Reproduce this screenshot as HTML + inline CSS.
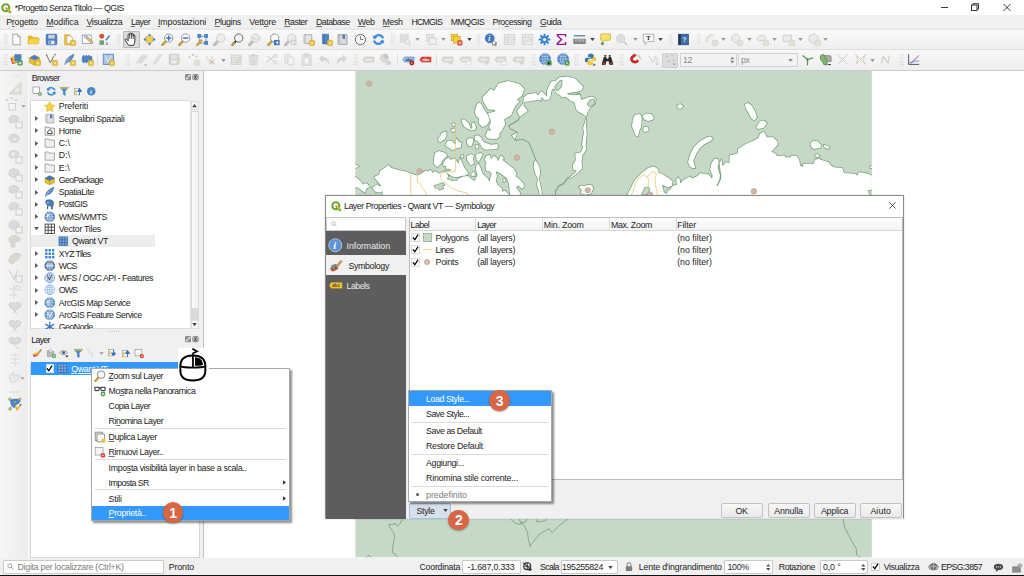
<!DOCTYPE html>
<html lang="it"><head><meta charset="utf-8"><title>*Progetto Senza Titolo — QGIS</title>
<style>
html,body{margin:0;padding:0;}
body{width:1024px;height:576px;overflow:hidden;background:#f0f0f0;position:relative;font-family:"Liberation Sans", Arial, sans-serif;font-size:8.8px;}
.a{position:absolute;}
.t{position:absolute;white-space:pre;line-height:12px;height:12px;font-family:"Liberation Sans", Arial, sans-serif;font-size:8.8px;}
u{text-decoration:underline;text-decoration-thickness:0.6px;text-underline-offset:1px;text-decoration-color:rgba(0,0,0,.55);}
svg{position:absolute;overflow:visible;}
</style></head>
<body>
<div class="a" style="left:0;top:0;width:1024px;height:15px;background:#fff"></div>
<svg viewBox="0 0 16 16" width="10.5" height="10.5" style="left:1.2px;top:2.5px"><circle cx="7.300" cy="7.300" r="5.300" fill="none" stroke="#6aa832" stroke-width="3.200"/><path d="M8.500 8.500l6.500 6.500" stroke="#6aa832" stroke-width="3.400"/><path d="M7.200 7.200l4 .8 3.800 7-6-4.800z" fill="#f0c020"/><circle cx="7.800" cy="7.800" r="1.200" fill="#d9403a"/></svg>
<span class="t" style="left:14.75px;top:1.90px;letter-spacing:-0.482px;color:#1c1c1c;">*Progetto Senza Titolo — QGIS</span>
<svg viewBox="0 0 80 15" width="80" height="15" style="left:936px;top:0"><path d="M5 7.500h7" stroke="#222" stroke-width=".9"/><rect x="35.500" y="5" width="5.500" height="5.500" fill="none" stroke="#222" stroke-width=".9"/><path d="M37 5V3.700h5.500v5.500H41" fill="none" stroke="#222" stroke-width=".9"/><path d="M67.500 4l7 7M74.500 4l-7 7" stroke="#222" stroke-width=".9"/></svg>
<div class="a" style="left:0;top:15px;width:1024px;height:14px;background:#f0f0f0"></div>
<span class="t" style="left:6.20px;top:16.30px;letter-spacing:-0.221px;color:#1c1c1c;">P<u>r</u>ogetto</span>
<span class="t" style="left:46.20px;top:16.30px;letter-spacing:-0.058px;color:#1c1c1c;"><u>M</u>odifica</span>
<span class="t" style="left:86.40px;top:16.30px;letter-spacing:-0.345px;color:#1c1c1c;"><u>V</u>isualizza</span>
<span class="t" style="left:130.90px;top:16.30px;letter-spacing:-0.583px;color:#1c1c1c;"><u>L</u>ayer</span>
<span class="t" style="left:158.00px;top:16.30px;letter-spacing:-0.116px;color:#1c1c1c;"><u>I</u>mpostazioni</span>
<span class="t" style="left:214.40px;top:16.30px;letter-spacing:-0.351px;color:#1c1c1c;"><u>P</u>lugins</span>
<span class="t" style="left:249.30px;top:16.30px;letter-spacing:-0.170px;color:#1c1c1c;">Vett<u>o</u>re</span>
<span class="t" style="left:284.20px;top:16.30px;letter-spacing:-0.487px;color:#1c1c1c;"><u>R</u>aster</span>
<span class="t" style="left:316.00px;top:16.30px;letter-spacing:-0.509px;color:#1c1c1c;"><u>D</u>atabase</span>
<span class="t" style="left:357.80px;top:16.30px;letter-spacing:-0.446px;color:#1c1c1c;"><u>W</u>eb</span>
<span class="t" style="left:382.60px;top:16.30px;letter-spacing:-0.379px;color:#1c1c1c;"><u>M</u>esh</span>
<span class="t" style="left:411.40px;top:16.30px;letter-spacing:-0.767px;color:#1c1c1c;">HCMGIS</span>
<span class="t" style="left:450.70px;top:16.30px;letter-spacing:-0.509px;color:#1c1c1c;">MMQGIS</span>
<span class="t" style="left:492.50px;top:16.30px;letter-spacing:-0.473px;color:#1c1c1c;">Pro<u>c</u>essing</span>
<span class="t" style="left:540.00px;top:16.30px;letter-spacing:-0.457px;color:#1c1c1c;"><u>G</u>uida</span>
<div class="a" style="left:0;top:28px;width:1024px;height:1.500px;background:#e9e9e9"></div>
<div class="a" style="left:0;top:29.500px;width:1024px;height:19.500px;background:linear-gradient(#fafafa,#f8f8f8 15%,#eeeeee)"></div>
<div class="a" style="left:0;top:49px;width:1024px;height:1px;background:#dedede"></div>
<div class="a" style="left:0;top:50px;width:1024px;height:20px;background:linear-gradient(#f8f8f8,#f6f6f6 15%,#eeeeee)"></div>
<div class="a" style="left:0;top:70px;width:1024px;height:1.400px;background:#cbcbcb"></div>
<svg viewBox="0 0 3.500 12" width="3.500" height="12" style="left:3.75px;top:33.20px" fill="#cbcbcb"><rect x=".2" y="0.8" width="1" height="1"/><rect x="2.300" y="0.8" width="1" height="1"/><rect x=".2" y="3.0999999999999996" width="1" height="1"/><rect x="2.300" y="3.0999999999999996" width="1" height="1"/><rect x=".2" y="5.3999999999999995" width="1" height="1"/><rect x="2.300" y="5.3999999999999995" width="1" height="1"/><rect x=".2" y="7.699999999999999" width="1" height="1"/><rect x="2.300" y="7.699999999999999" width="1" height="1"/><rect x=".2" y="10.0" width="1" height="1"/><rect x="2.300" y="10.0" width="1" height="1"/></svg>
<svg viewBox="0 0 3.500 12" width="3.500" height="12" style="left:3.75px;top:53.80px" fill="#cbcbcb"><rect x=".2" y="0.8" width="1" height="1"/><rect x="2.300" y="0.8" width="1" height="1"/><rect x=".2" y="3.0999999999999996" width="1" height="1"/><rect x="2.300" y="3.0999999999999996" width="1" height="1"/><rect x=".2" y="5.3999999999999995" width="1" height="1"/><rect x="2.300" y="5.3999999999999995" width="1" height="1"/><rect x=".2" y="7.699999999999999" width="1" height="1"/><rect x="2.300" y="7.699999999999999" width="1" height="1"/><rect x=".2" y="10.0" width="1" height="1"/><rect x="2.300" y="10.0" width="1" height="1"/></svg>
<div class="a" style="left:123px;top:31px;width:16.500px;height:16.500px;background:#dcdcdc;border:1px solid #b9b9b9;box-sizing:border-box;border-radius:1px"></div>
<svg viewBox="0 0 16 16" width="13" height="13" style="left:10.10px;top:32.70px"><path d="M3.5 1.5h6l3 3v10h-9z" fill="#fff" stroke="#8a8a8a" stroke-width=".9"/><path d="M9.5 1.5v3h3" fill="none" stroke="#8a8a8a" stroke-width=".8"/></svg>
<svg viewBox="0 0 16 16" width="13" height="13" style="left:27.10px;top:32.70px"><path d="M1 3.5h5l1.3 1.6h6.7v8.4h-13z" fill="#e8b92e"/><path d="M1 13.5l2-6.5h12.5l-2 6.5z" fill="#f6d54a" stroke="#d9a520" stroke-width=".5"/></svg>
<svg viewBox="0 0 16 16" width="13" height="13" style="left:44.90px;top:32.70px"><rect x="1.5" y="1.5" width="13" height="13" rx="1.5" fill="#4a7fc0" stroke="#2f5f9e" stroke-width=".8"/><rect x="4" y="2.3" width="8" height="4.6" fill="#c9d2dd"/><rect x="4.3" y="9.5" width="7.4" height="4.3" fill="#e8edf3"/><rect x="5.2" y="10.3" width="2" height="2.8" fill="#3b689f"/></svg>
<svg viewBox="0 0 16 16" width="13" height="13" style="left:62.80px;top:32.70px"><path d="M2 2h6l3 3v9.5h-9z" fill="#f0c53a" stroke="#c79a1e" stroke-width=".7"/><path d="M5 3.5h4l2.5 2.5v7h-6.5z" fill="#fff" stroke="#9a9a9a" stroke-width=".6"/><rect x="9" y="9" width="6.5" height="6.5" rx="1" fill="#e9c13a" stroke="#c9a227" stroke-width=".6"/><path d="M10.6 11.6h3.3l-1.65 2.4z" fill="#fff7c8"/></svg>
<svg viewBox="0 0 16 16" width="13" height="13" style="left:80.50px;top:32.70px"><rect x="1.5" y="2.5" width="11" height="10.5" fill="#fff" stroke="#6d8fb5" stroke-width=".9"/><path d="M5 5l7.5 8 1.8-.4.2-1.8L7 3.5z" fill="#e6c070" stroke="#8a6a2a" stroke-width=".6"/><circle cx="5.6" cy="4.6" r="1.7" fill="#d8d8d8" stroke="#777" stroke-width=".6"/></svg>
<svg viewBox="0 0 16 16" width="13" height="13" style="left:98.00px;top:32.70px"><circle cx="4.6" cy="4" r="3" fill="#d9503a"/><rect x="1.8" y="9" width="5.6" height="5.6" fill="#6aa56a"/><path d="M9 8.5l4.6-6 1.4 1.1-4.6 6z" fill="#3f79c2"/><text x="9.3" y="15" font-size="6.5" font-family="Liberation Serif, serif" fill="#444">a</text></svg>
<svg viewBox="0 0 3.500 12" width="3.500" height="12" style="left:117.25px;top:33.20px" fill="#cbcbcb"><rect x=".2" y="0.8" width="1" height="1"/><rect x="2.300" y="0.8" width="1" height="1"/><rect x=".2" y="3.0999999999999996" width="1" height="1"/><rect x="2.300" y="3.0999999999999996" width="1" height="1"/><rect x=".2" y="5.3999999999999995" width="1" height="1"/><rect x="2.300" y="5.3999999999999995" width="1" height="1"/><rect x=".2" y="7.699999999999999" width="1" height="1"/><rect x="2.300" y="7.699999999999999" width="1" height="1"/><rect x=".2" y="10.0" width="1" height="1"/><rect x="2.300" y="10.0" width="1" height="1"/></svg>
<svg viewBox="0 0 16 16" width="14" height="14" style="left:124.30px;top:32.20px"><path d="M5.400 15.300C4.300 13.400 2.300 11.200 1.300 9.400 0.700 8.200 2.200 7.300 3.200 8.400L4.700 10V3.300c0-1.400 1.900-1.400 1.900 0V2.100c0-1.400 2-1.400 2 0v.6c0-1.400 1.900-1.400 1.900 0v1.700c0-1.300 1.900-1.300 1.900 0v6.100c0 2-.7 3.300-1.400 4.800z" fill="#fff" stroke="#111" stroke-width=".95" stroke-linejoin="round"/><path d="M6.600 3.300v4.500M8.600 2.400v5.100M10.500 3v4.800" stroke="#111" stroke-width=".8" fill="none"/></svg>
<svg viewBox="0 0 16 16" width="13" height="13" style="left:142.90px;top:32.70px"><rect x="4.5" y="4.5" width="7" height="7" fill="#f2d23c" stroke="#c79a1e" stroke-width=".6"/><path d="M8 .5l2.4 3H5.6zM8 15.5l2.4-3H5.6zM.5 8l3-2.4v4.8zM15.5 8l-3-2.4v4.8z" fill="#3f79c2"/></svg>
<svg viewBox="0 0 16 16" width="13" height="13" style="left:160.50px;top:32.70px"><path d="M1.800 14.600l4.200-4.600" stroke="#4a3a10" stroke-width="2.900" stroke-linecap="round" opacity=".55"/><path d="M1.800 14.600l4.200-4.600" stroke="#d9a520" stroke-width="1.900" stroke-linecap="round"/><circle cx="9.500" cy="6.200" r="5.100" fill="#fdfdfd" stroke="#8a8a8a" stroke-width="1.100"/><path d="M6.300 6.200h6.400M9.500 3v6.400" stroke="#3a78c4" stroke-width="1.900"/></svg>
<svg viewBox="0 0 16 16" width="13" height="13" style="left:178.10px;top:32.70px"><path d="M1.800 14.600l4.200-4.600" stroke="#4a3a10" stroke-width="2.900" stroke-linecap="round" opacity=".55"/><path d="M1.800 14.600l4.200-4.600" stroke="#d9a520" stroke-width="1.900" stroke-linecap="round"/><circle cx="9.500" cy="6.200" r="5.100" fill="#fdfdfd" stroke="#8a8a8a" stroke-width="1.100"/><path d="M6.300 6.200h6.400" stroke="#3a78c4" stroke-width="1.900"/></svg>
<svg viewBox="0 0 16 16" width="13" height="13" style="left:196.20px;top:32.70px"><path d="M4 4h8.500v8.500h-8.500z" fill="#f2f2f2" stroke="#6a6a6a" stroke-width=".8"/><rect x="1.600" y="1.200" width="4.800" height="4.800" fill="#4a86c8"/><rect x="10" y="1.200" width="4.800" height="4.800" fill="#4a86c8"/><rect x="10" y="9.800" width="4.800" height="4.800" fill="#4a86c8"/><path d="M1.500 14.800l5-5.500" stroke="#4a3a10" stroke-width="2.800" stroke-linecap="round" opacity=".55"/><path d="M1.500 14.800l5-5.500" stroke="#e0ad25" stroke-width="1.800" stroke-linecap="round"/></svg>
<svg viewBox="0 0 16 16" width="13" height="13" style="left:212.80px;top:32.70px"><path d="M1.800 14.600l4.200-4.600" stroke="#4a3a10" stroke-width="2.900" stroke-linecap="round" opacity=".55"/><path d="M1.800 14.600l4.200-4.600" stroke="#c9c9c9" stroke-width="1.900" stroke-linecap="round"/><circle cx="9.500" cy="6.200" r="5.100" fill="#ececec" stroke="#c9c9c9" stroke-width="1.100"/></svg>
<svg viewBox="0 0 16 16" width="13" height="13" style="left:231.00px;top:32.70px"><path d="M1.800 14.600l4.200-4.600" stroke="#4a3a10" stroke-width="2.900" stroke-linecap="round" opacity=".55"/><path d="M1.800 14.600l4.200-4.600" stroke="#3a3a3a" stroke-width="1.900" stroke-linecap="round"/><circle cx="9.500" cy="6.200" r="5.100" fill="#f4f4f4" stroke="#555" stroke-width="1.100"/><path d="M2 14.5l2-2.2" stroke="#d9a520" stroke-width="2.2" stroke-linecap="round"/></svg>
<svg viewBox="0 0 16 16" width="13" height="13" style="left:248.00px;top:32.70px"><path d="M1.800 14.600l4.200-4.600" stroke="#4a3a10" stroke-width="2.900" stroke-linecap="round" opacity=".55"/><path d="M1.800 14.600l4.200-4.600" stroke="#c9c9c9" stroke-width="1.900" stroke-linecap="round"/><circle cx="9.500" cy="6.200" r="5.100" fill="#ececec" stroke="#c9c9c9" stroke-width="1.100"/><text x="6.4" y="8.3" font-size="5" fill="#bdbdbd" font-family="Liberation Sans, sans-serif">1:1</text></svg>
<svg viewBox="0 0 16 16" width="13" height="13" style="left:266.50px;top:32.70px"><path d="M1.800 14.600l4.200-4.600" stroke="#4a3a10" stroke-width="2.900" stroke-linecap="round" opacity=".55"/><path d="M1.800 14.600l4.200-4.600" stroke="#d9a520" stroke-width="1.900" stroke-linecap="round"/><circle cx="9.500" cy="6.200" r="5.100" fill="#fdfdfd" stroke="#8a8a8a" stroke-width="1.100"/><rect x="8.5" y="8.5" width="7" height="6.5" fill="#3f79c2"/><path d="M13.6 9.8l-3 2 3 2z" fill="#fff"/></svg>
<svg viewBox="0 0 16 16" width="13" height="13" style="left:284.10px;top:32.70px"><path d="M1.800 14.600l4.200-4.600" stroke="#4a3a10" stroke-width="2.900" stroke-linecap="round" opacity=".55"/><path d="M1.800 14.600l4.200-4.600" stroke="#c9c9c9" stroke-width="1.900" stroke-linecap="round"/><circle cx="9.500" cy="6.200" r="5.100" fill="#ececec" stroke="#c9c9c9" stroke-width="1.100"/><rect x="8.5" y="8.5" width="7" height="6.5" fill="#d2d2d2"/><path d="M10.4 9.8l3 2-3 2z" fill="#f4f4f4"/></svg>
<svg viewBox="0 0 16 16" width="13" height="13" style="left:301.50px;top:32.70px"><path d="M2.5 2h9.5v11h-8c-1 0-1.5-.5-1.5-1.5z" fill="#e4e4e4" stroke="#8f8f8f" stroke-width=".8"/><path d="M4.5 2v11" stroke="#a9a9a9" stroke-width=".6"/><rect x="9" y="9" width="6.5" height="6.5" rx="1" fill="#e9c13a" stroke="#c9a227" stroke-width=".6"/><path d="M10.6 11.6h3.3l-1.65 2.4z" fill="#fff7c8"/></svg>
<svg viewBox="0 0 16 16" width="13" height="13" style="left:320.20px;top:32.70px"><path d="M3 1.5h7.5v12h-6c-1 0-1.5-.5-1.5-1.5z" fill="#4a86c8" stroke="#2f5f9e" stroke-width=".7"/><path d="M5 1.5v12" stroke="#2f5f9e" stroke-width=".5"/><rect x="9" y="9" width="6.5" height="6.5" rx="1" fill="#e9c13a" stroke="#c9a227" stroke-width=".6"/><path d="M10.6 11.6h3.3l-1.65 2.4z" fill="#fff7c8"/></svg>
<svg viewBox="0 0 16 16" width="13" height="13" style="left:336.20px;top:32.70px"><path d="M2.5 2h11v12h-9.5c-1 0-1.5-.5-1.5-1.5z" fill="#dcdcdc" stroke="#7f7f7f" stroke-width=".8"/><path d="M4.6 2v12" stroke="#9a9a9a" stroke-width=".6"/><path d="M8 2h3v6l-1.5-1.4L8 8z" fill="#3f79c2"/></svg>
<svg viewBox="0 0 16 16" width="13" height="13" style="left:353.80px;top:32.70px"><circle cx="8" cy="8" r="6.3" fill="#fafafa" stroke="#5a5a5a" stroke-width="1.1"/><path d="M8 3.6V8h3.4" fill="none" stroke="#5a5a5a" stroke-width=".9"/></svg>
<svg viewBox="0 0 16 16" width="13" height="13" style="left:372.00px;top:32.70px"><path d="M13.6 6.6A6 6 0 0 0 3 5.2" fill="none" stroke="#3f8bd8" stroke-width="2.6"/><path d="M.8 3l1.4 5 4.6-2.4z" fill="#3f8bd8"/><path d="M2.4 9.4A6 6 0 0 0 13 10.8" fill="none" stroke="#3f8bd8" stroke-width="2.6"/><path d="M15.2 13l-1.4-5-4.6 2.4z" fill="#3f8bd8"/></svg>
<svg viewBox="0 0 3.500 12" width="3.500" height="12" style="left:390.95px;top:33.20px" fill="#cbcbcb"><rect x=".2" y="0.8" width="1" height="1"/><rect x="2.300" y="0.8" width="1" height="1"/><rect x=".2" y="3.0999999999999996" width="1" height="1"/><rect x="2.300" y="3.0999999999999996" width="1" height="1"/><rect x=".2" y="5.3999999999999995" width="1" height="1"/><rect x="2.300" y="5.3999999999999995" width="1" height="1"/><rect x=".2" y="7.699999999999999" width="1" height="1"/><rect x="2.300" y="7.699999999999999" width="1" height="1"/><rect x=".2" y="10.0" width="1" height="1"/><rect x="2.300" y="10.0" width="1" height="1"/></svg>
<svg viewBox="0 0 16 16" width="13" height="13" style="left:398.90px;top:32.70px"><rect x="1.5" y="1.5" width="10" height="10" fill="#dedede" stroke="#c9c9c9" stroke-width=".8" stroke-dasharray="1.5 1"/><path d="M8 7l1 7.5 1.8-2 2 3 1.2-.8-2-3 2.6-.6z" fill="#f7f7f7" stroke="#bdbdbd" stroke-width=".6"/></svg>
<svg viewBox="0 0 6 4" width="5" height="3" style="left:415.20px;top:38.20px"><path d="M0 0h6L3 4z" fill="#9a9a9a"/></svg>
<svg viewBox="0 0 16 16" width="13" height="13" style="left:424.50px;top:32.70px"><rect x="2" y="2" width="9" height="8" fill="#e3e3e3" stroke="#c9c9c9" stroke-width=".7"/><rect x="5" y="6" width="9" height="8" fill="#e9e9e9" stroke="#c9c9c9" stroke-width=".7"/><path d="M6.5 9h6M6.5 11.5h6" stroke="#f8f8f8" stroke-width="1"/></svg>
<svg viewBox="0 0 6 4" width="5" height="3" style="left:441.00px;top:38.20px"><path d="M0 0h6L3 4z" fill="#9a9a9a"/></svg>
<svg viewBox="0 0 16 16" width="13" height="13" style="left:450.30px;top:32.70px"><rect x="1.5" y="1.5" width="8" height="8" fill="#f2d23c" stroke="#c79a1e" stroke-width=".7"/><rect x="4.5" y="4.5" width="8" height="8" fill="#f2d23c" stroke="#c79a1e" stroke-width=".7"/><rect x="9" y="9" width="6.3" height="6.3" rx="1" fill="#d9503a"/><path d="M10.6 10.6l3.1 3.1M13.7 10.6l-3.1 3.1" stroke="#fff" stroke-width=".9"/></svg>
<svg viewBox="0 0 6 4" width="5" height="3" style="left:466.50px;top:38.20px"><path d="M0 0h6L3 4z" fill="#444"/></svg>
<svg viewBox="0 0 3.500 12" width="3.500" height="12" style="left:477.25px;top:33.20px" fill="#cbcbcb"><rect x=".2" y="0.8" width="1" height="1"/><rect x="2.300" y="0.8" width="1" height="1"/><rect x=".2" y="3.0999999999999996" width="1" height="1"/><rect x="2.300" y="3.0999999999999996" width="1" height="1"/><rect x=".2" y="5.3999999999999995" width="1" height="1"/><rect x="2.300" y="5.3999999999999995" width="1" height="1"/><rect x=".2" y="7.699999999999999" width="1" height="1"/><rect x="2.300" y="7.699999999999999" width="1" height="1"/><rect x=".2" y="10.0" width="1" height="1"/><rect x="2.300" y="10.0" width="1" height="1"/></svg>
<svg viewBox="0 0 16 16" width="13" height="13" style="left:484.30px;top:32.70px"><circle cx="7" cy="6.6" r="5.6" fill="#3f79c2" stroke="#2f5f9e" stroke-width=".6"/><text x="5.3" y="10" font-size="9" font-weight="bold" font-style="italic" font-family="Liberation Serif, serif" fill="#fff">i</text><path d="M10 8.5l1 7 1.6-1.8 1.6 2.4 1-.7-1.6-2.4 2.3-.5z" fill="#fff" stroke="#333" stroke-width=".7"/></svg>
<svg viewBox="0 0 16 16" width="13" height="13" style="left:502.80px;top:32.70px"><rect x="1.5" y="2" width="13" height="12" fill="#ececec" stroke="#c9c9c9" stroke-width=".8"/><path d="M1.5 5.5h13M1.5 8.4h13M1.5 11.2h13M6 2v12" stroke="#c9c9c9" stroke-width=".7"/></svg>
<svg viewBox="0 0 16 16" width="13" height="13" style="left:520.50px;top:32.70px"><rect x="1.5" y="2" width="13" height="12" fill="#ececec" stroke="#c9c9c9" stroke-width=".8"/><path d="M1.5 6h13M1.5 10h13" stroke="#c9c9c9" stroke-width=".7"/><circle cx="5" cy="4" r="1" fill="#c9c9c9"/><circle cx="9" cy="4" r="1" fill="#c9c9c9"/><circle cx="12" cy="8" r="1" fill="#c9c9c9"/><circle cx="4" cy="12" r="1" fill="#c9c9c9"/></svg>
<svg viewBox="0 0 16 16" width="13" height="13" style="left:538.00px;top:32.70px"><g fill="#3f86d2"><circle cx="8" cy="8" r="4.6"/><g stroke="#3f86d2" stroke-width="2.4"><path d="M8 .8v14.4M.8 8h14.4M2.9 2.9l10.2 10.2M13.1 2.9L2.9 13.1"/></g></g><circle cx="8" cy="8" r="2" fill="#f0f0f0"/></svg>
<svg viewBox="0 0 16 16" width="13" height="13" style="left:555.10px;top:32.70px"><path d="M13 4.6V2H3v1.4L8 8l-5 4.8V14h10v-2.8" fill="none" stroke="#8e1f8e" stroke-width="1.8"/></svg>
<svg viewBox="0 0 16 16" width="13" height="13" style="left:573.30px;top:32.70px"><path d="M1 3.5h14" stroke="#2f5f9e" stroke-width="1.3"/><rect x="1" y="7.5" width="14" height="5.5" fill="#8c8c8c" stroke="#555" stroke-width=".7"/><path d="M3.5 7.5v3M6 7.5v2M8.5 7.5v3M11 7.5v2M13.2 7.5v3" stroke="#fff" stroke-width=".7"/></svg>
<svg viewBox="0 0 6 4" width="5" height="3" style="left:589.50px;top:38.20px"><path d="M0 0h6L3 4z" fill="#444"/></svg>
<svg viewBox="0 0 16 16" width="13" height="13" style="left:598.50px;top:32.70px"><path d="M2 2.5c0-1 .8-1.5 1.6-1.5h9c1 0 1.6.6 1.6 1.5v5c0 1-.7 1.5-1.6 1.5H7l-3 3V9c-1.2 0-2-.6-2-1.5z" fill="#f5e26a" stroke="#c9a227" stroke-width=".8"/><circle cx="4.2" cy="13" r="2" fill="#58a058"/></svg>
<svg viewBox="0 0 16 16" width="13" height="13" style="left:615.30px;top:32.70px"><circle cx="7" cy="7" r="5" fill="#e6e6e6" stroke="#c9c9c9" stroke-width="1"/><circle cx="7" cy="7" r="2.2" fill="none" stroke="#c9c9c9" stroke-width="1"/><path d="M10.5 10.5l4 4" stroke="#c9c9c9" stroke-width="1.6"/></svg>
<svg viewBox="0 0 6 4" width="5" height="3" style="left:632.90px;top:38.20px"><path d="M0 0h6L3 4z" fill="#9a9a9a"/></svg>
<svg viewBox="0 0 16 16" width="13" height="13" style="left:641.50px;top:32.70px"><path d="M1.5 1.5h13v9h-7l-4 3.5v-3.5h-2z" fill="#fbfbfb" stroke="#8a8a8a" stroke-width=".8"/><text x="5.2" y="9" font-size="8" font-weight="bold" font-family="Liberation Serif, serif" fill="#222">T</text></svg>
<svg viewBox="0 0 6 4" width="5" height="3" style="left:658.30px;top:38.20px"><path d="M0 0h6L3 4z" fill="#444"/></svg>
<svg viewBox="0 0 3.500 12" width="3.500" height="12" style="left:669.25px;top:33.20px" fill="#cbcbcb"><rect x=".2" y="0.8" width="1" height="1"/><rect x="2.300" y="0.8" width="1" height="1"/><rect x=".2" y="3.0999999999999996" width="1" height="1"/><rect x="2.300" y="3.0999999999999996" width="1" height="1"/><rect x=".2" y="5.3999999999999995" width="1" height="1"/><rect x="2.300" y="5.3999999999999995" width="1" height="1"/><rect x=".2" y="7.699999999999999" width="1" height="1"/><rect x="2.300" y="7.699999999999999" width="1" height="1"/><rect x=".2" y="10.0" width="1" height="1"/><rect x="2.300" y="10.0" width="1" height="1"/></svg>
<svg viewBox="0 0 16 16" width="13" height="13" style="left:676.80px;top:32.70px"><rect x="2" y="1.5" width="12" height="13" fill="#3c6ea8" stroke="#1f3f66" stroke-width=".8"/><rect x="2" y="1.5" width="2.6" height="13" fill="#1f3352"/><text x="6.4" y="11.3" font-size="8.5" font-weight="bold" font-family="Liberation Sans, sans-serif" fill="#dfe9f5">?</text></svg>
<svg viewBox="0 0 3.500 12" width="3.500" height="12" style="left:696.55px;top:33.20px" fill="#cbcbcb"><rect x=".2" y="0.8" width="1" height="1"/><rect x="2.300" y="0.8" width="1" height="1"/><rect x=".2" y="3.0999999999999996" width="1" height="1"/><rect x="2.300" y="3.0999999999999996" width="1" height="1"/><rect x=".2" y="5.3999999999999995" width="1" height="1"/><rect x="2.300" y="5.3999999999999995" width="1" height="1"/><rect x=".2" y="7.699999999999999" width="1" height="1"/><rect x="2.300" y="7.699999999999999" width="1" height="1"/><rect x=".2" y="10.0" width="1" height="1"/><rect x="2.300" y="10.0" width="1" height="1"/></svg>
<svg viewBox="0 0 16 16" width="13" height="13" style="left:704.50px;top:32.70px"><path d="M2 12V8a6 6 0 0 1 9-5" fill="#ebebeb" stroke="#c9c9c9" stroke-width="1"/><rect x="9" y="9" width="6.5" height="6.5" rx="1" fill="#e4e2da" stroke="#c9c7bd" stroke-width=".6"/></svg>
<svg viewBox="0 0 6 4" width="5" height="3" style="left:720.80px;top:38.20px"><path d="M0 0h6L3 4z" fill="#9a9a9a"/></svg>
<svg viewBox="0 0 16 16" width="13" height="13" style="left:729.50px;top:32.70px"><path d="M7 1.5a5.2 5.2 0 1 0 .1 0z" fill="#ebebeb" stroke="#c9c9c9" stroke-width="1"/><rect x="9" y="9" width="6.5" height="6.5" rx="1" fill="#e4e2da" stroke="#c9c7bd" stroke-width=".6"/></svg>
<svg viewBox="0 0 6 4" width="5" height="3" style="left:746.50px;top:38.20px"><path d="M0 0h6L3 4z" fill="#9a9a9a"/></svg>
<svg viewBox="0 0 16 16" width="13" height="13" style="left:755.90px;top:32.70px"><path d="M1 8c1-4 5-6 8-5s4 5 0 6-6 1-8-1z" fill="#ebebeb" stroke="#c9c9c9" stroke-width="1"/><rect x="9" y="9" width="6.5" height="6.5" rx="1" fill="#e4e2da" stroke="#c9c7bd" stroke-width=".6"/></svg>
<svg viewBox="0 0 6 4" width="5" height="3" style="left:772.10px;top:38.20px"><path d="M0 0h6L3 4z" fill="#9a9a9a"/></svg>
<svg viewBox="0 0 16 16" width="13" height="13" style="left:781.80px;top:32.70px"><path d="M1.5 2.5h10v8h-10z" fill="#ebebeb" stroke="#c9c9c9" stroke-width="1"/><rect x="9" y="9" width="6.5" height="6.5" rx="1" fill="#e4e2da" stroke="#c9c7bd" stroke-width=".6"/></svg>
<svg viewBox="0 0 6 4" width="5" height="3" style="left:797.50px;top:38.20px"><path d="M0 0h6L3 4z" fill="#9a9a9a"/></svg>
<svg viewBox="0 0 16 16" width="13" height="13" style="left:807.50px;top:32.70px"><path d="M7 1l5.5 3v6l-5.5 3-5.5-3v-6z" fill="#ebebeb" stroke="#c9c9c9" stroke-width="1"/><rect x="9" y="9" width="6.5" height="6.5" rx="1" fill="#e4e2da" stroke="#c9c7bd" stroke-width=".6"/></svg>
<svg viewBox="0 0 6 4" width="5" height="3" style="left:823.30px;top:38.20px"><path d="M0 0h6L3 4z" fill="#9a9a9a"/></svg>
<div class="a" style="left:661.800px;top:52.500px;width:16.500px;height:15.500px;background:#dddddd;border:1px solid #cfcfcf;box-sizing:border-box;border-radius:1px"></div>
<svg viewBox="0 0 16 16" width="13" height="13" style="left:10.10px;top:53.30px"><rect x="1.5" y="5" width="8" height="8" fill="#d9503a" transform="rotate(-18 5 9)"/><rect x="3" y="3.5" width="8" height="8" fill="#f0c53a" transform="rotate(-8 7 7)"/><rect x="5.5" y="1.5" width="8.5" height="8.5" fill="#4a7fc0"/><rect x="9.3" y="9.3" width="6.2" height="6.2" rx="1" fill="#4a9a4a"/><path d="M10.6 12.4h3.6M12.4 10.6v3.6" stroke="#fff" stroke-width="1.1"/></svg>
<svg viewBox="0 0 16 16" width="13" height="13" style="left:27.70px;top:53.30px"><path d="M1.5 6l6.5-3.5 6.5 3.5v6l-6.5 3-6.5-3z" fill="#e8c02e" stroke="#b8921a" stroke-width=".6"/><path d="M1.5 6l6.5 3 6.5-3-6.5-3.5z" fill="#4a7fc0"/><path d="M8 9v6" stroke="#b8921a" stroke-width=".6"/><rect x="9" y="9" width="6.5" height="6.5" rx="1" fill="#e9c13a" stroke="#c9a227" stroke-width=".6"/><path d="M10.6 11.6h3.3l-1.65 2.4z" fill="#fff7c8"/></svg>
<svg viewBox="0 0 16 16" width="13" height="13" style="left:45.30px;top:53.30px"><path d="M2 2.5l4.5 9.5L11 3.5" fill="none" stroke="#555" stroke-width="1"/><circle cx="2" cy="2.5" r="1" fill="#777"/><circle cx="12.5" cy="2" r="1" fill="#777"/><rect x="9" y="9" width="6.5" height="6.5" rx="1" fill="#e9c13a" stroke="#c9a227" stroke-width=".6"/><path d="M10.6 11.6h3.3l-1.65 2.4z" fill="#fff7c8"/></svg>
<svg viewBox="0 0 16 16" width="13" height="13" style="left:62.80px;top:53.30px"><path d="M2 14.5c1-5 4-10 11.5-13-1 5-4.5 9.5-9 10.5z" fill="#5d8fcc" stroke="#2f5f9e" stroke-width=".6"/><path d="M2 14.5l6-8" stroke="#e8eef6" stroke-width=".6"/><rect x="9" y="9" width="6.5" height="6.5" rx="1" fill="#e9c13a" stroke="#c9a227" stroke-width=".6"/><path d="M10.6 11.6h3.3l-1.65 2.4z" fill="#fff7c8"/></svg>
<svg viewBox="0 0 16 16" width="13" height="13" style="left:80.80px;top:53.30px"><rect x="1.5" y="4" width="12" height="7" rx="1" fill="#4a86c8" stroke="#2f5f9e" stroke-width=".6"/><path d="M3.5 4V2.4M6.5 4V2.4M9.5 4V2.4M3.5 11v1.6M6.5 11v1.6" stroke="#2f5f9e" stroke-width="1.1"/><rect x="9" y="9" width="6.5" height="6.5" rx="1" fill="#e9c13a" stroke="#c9a227" stroke-width=".6"/><path d="M10.6 11.6h3.3l-1.65 2.4z" fill="#fff7c8"/></svg>
<div class="a" style="left:97.10px;top:53.80px;width:1px;height:12px;background:#e0e0e0"></div>
<svg viewBox="0 0 16 16" width="13" height="13" style="left:101.90px;top:53.30px"><rect x="1.5" y="1.5" width="12.5" height="12.5" fill="#a9c6e6" stroke="#4a7fc0" stroke-width="1"/><path d="M4 3l3.6 8L11.5 3" fill="none" stroke="#f4f7fb" stroke-width="1.1"/><rect x="9" y="9" width="6.5" height="6.5" rx="1" fill="#e9c13a" stroke="#c9a227" stroke-width=".6"/><path d="M10.6 11.6h3.3l-1.65 2.4z" fill="#fff7c8"/></svg>
<svg viewBox="0 0 3.500 12" width="3.500" height="12" style="left:126.25px;top:53.80px" fill="#cbcbcb"><rect x=".2" y="0.8" width="1" height="1"/><rect x="2.300" y="0.8" width="1" height="1"/><rect x=".2" y="3.0999999999999996" width="1" height="1"/><rect x="2.300" y="3.0999999999999996" width="1" height="1"/><rect x=".2" y="5.3999999999999995" width="1" height="1"/><rect x="2.300" y="5.3999999999999995" width="1" height="1"/><rect x=".2" y="7.699999999999999" width="1" height="1"/><rect x="2.300" y="7.699999999999999" width="1" height="1"/><rect x=".2" y="10.0" width="1" height="1"/><rect x="2.300" y="10.0" width="1" height="1"/></svg>
<svg viewBox="0 0 16 16" width="13" height="13" style="left:134.50px;top:53.30px"><path d="M2 13l1-3 6-8 2 1.5-6 8zM6 13l1-3 6-8 2 1.5-6 8z" fill="#dedede" stroke="#c9c9c9" stroke-width=".7"/><path d="M11 14h4l-2 2z" fill="#9a9a9a"/></svg>
<svg viewBox="0 0 16 16" width="13" height="13" style="left:150.50px;top:53.30px"><path d="M3 14l1-3.4 7-9 2.2 1.7-7 9z" fill="#e2e2e2" stroke="#c9c9c9" stroke-width=".8"/></svg>
<svg viewBox="0 0 16 16" width="13" height="13" style="left:167.90px;top:53.30px"><rect x="1.500" y="1.500" width="12" height="12.500" rx="1.500" fill="#d3d3d3" stroke="#c4c4c4" stroke-width=".8"/><rect x="3.800" y="2.300" width="7.400" height="4.400" fill="#e6e6e6"/><rect x="4" y="9" width="7" height="4.300" fill="#ebebeb"/><path d="M9 13.500l5-6 1.300 1-5 6z" fill="#e3ddc9" stroke="#cfc9b6" stroke-width=".5"/></svg>
<svg viewBox="0 0 16 16" width="13" height="13" style="left:187.00px;top:53.30px"><circle cx="3" cy="5" r="1.4" fill="#c9c9c9"/><circle cx="7" cy="2.4" r="1.4" fill="#c9c9c9"/><circle cx="11.5" cy="4.4" r="1.4" fill="#c9c9c9"/><rect x="9" y="9" width="6.5" height="6.5" rx="1" fill="#e4e2da" stroke="#c9c7bd" stroke-width=".6"/></svg>
<svg viewBox="0 0 16 16" width="13" height="13" style="left:204.00px;top:53.30px"><path d="M2 3l5 9 4-9" fill="none" stroke="#c9c9c9" stroke-width="1"/><path d="M7 8l6 6M13 8l-6 6" stroke="#cdbf9a" stroke-width="1.3"/></svg>
<svg viewBox="0 0 6 4" width="5" height="3" style="left:220.50px;top:58.80px"><path d="M0 0h6L3 4z" fill="#9a9a9a"/></svg>
<svg viewBox="0 0 16 16" width="13" height="13" style="left:229.50px;top:53.30px"><rect x="1.5" y="2.5" width="12" height="11.5" fill="#e7e7e7" stroke="#c9c9c9" stroke-width=".8"/><path d="M1.5 6h12M1.5 9h12M1.5 12h12" stroke="#c9c9c9" stroke-width=".7"/><path d="M7 12l6-9 1.8 1.2-6 9z" fill="#e1dccb" stroke="#c9c9c9" stroke-width=".5"/></svg>
<svg viewBox="0 0 16 16" width="13" height="13" style="left:246.50px;top:53.30px"><path d="M3 5h10l-1 9.5H4z" fill="#e4e4e4" stroke="#c9c9c9" stroke-width=".8"/><path d="M2 3.5h12M6 2h4" stroke="#c9c9c9" stroke-width="1.2"/><path d="M6 7v6M8 7v6M10 7v6" stroke="#c9c9c9" stroke-width=".7"/></svg>
<svg viewBox="0 0 16 16" width="13" height="13" style="left:264.50px;top:53.30px"><path d="M2 3l10 8M2 11l10-8" stroke="#c9c9c9" stroke-width="1.2"/><circle cx="12.8" cy="11.8" r="1.8" fill="none" stroke="#c9c9c9" stroke-width="1"/><circle cx="12.8" cy="3.8" r="1.8" fill="none" stroke="#c9c9c9" stroke-width="1"/></svg>
<svg viewBox="0 0 16 16" width="13" height="13" style="left:282.50px;top:53.30px"><path d="M2.5 2h6l2 2v8h-8z" fill="#ececec" stroke="#c9c9c9" stroke-width=".8"/><path d="M6 5h5.5l2 2v7.5H6z" fill="#f2f2f2" stroke="#c9c9c9" stroke-width=".8"/></svg>
<svg viewBox="0 0 16 16" width="13" height="13" style="left:299.50px;top:53.30px"><rect x="2.5" y="2.5" width="11" height="12.5" fill="#e6e6e6" stroke="#c9c9c9" stroke-width=".9"/><rect x="5.5" y="1" width="5" height="3" fill="#dadada" stroke="#c9c9c9" stroke-width=".6"/><rect x="5" y="6" width="6" height="7.5" fill="#f5f5f5" stroke="#c9c9c9" stroke-width=".6"/></svg>
<svg viewBox="0 0 16 16" width="13" height="13" style="left:317.50px;top:53.30px"><path d="M13 13c1-5-2-7.5-7-7.5V2.5L1.5 7 6 11.5V8.6c3.5 0 5.5 1 7 4.4z" fill="#d6d6d6" stroke="#c9c9c9" stroke-width=".5"/></svg>
<svg viewBox="0 0 16 16" width="13" height="13" style="left:335.20px;top:53.30px"><path d="M3 13c-1-5 2-7.5 7-7.5V2.5L14.500 7 10 11.5V8.6c-3.500 0-5.500 1-7 4.400z" fill="#d6d6d6" stroke="#c9c9c9" stroke-width=".5"/></svg>
<svg viewBox="0 0 3.500 12" width="3.500" height="12" style="left:354.25px;top:53.80px" fill="#cbcbcb"><rect x=".2" y="0.8" width="1" height="1"/><rect x="2.300" y="0.8" width="1" height="1"/><rect x=".2" y="3.0999999999999996" width="1" height="1"/><rect x="2.300" y="3.0999999999999996" width="1" height="1"/><rect x=".2" y="5.3999999999999995" width="1" height="1"/><rect x="2.300" y="5.3999999999999995" width="1" height="1"/><rect x=".2" y="7.699999999999999" width="1" height="1"/><rect x="2.300" y="7.699999999999999" width="1" height="1"/><rect x=".2" y="10.0" width="1" height="1"/><rect x="2.300" y="10.0" width="1" height="1"/></svg>
<svg viewBox="0 0 16 16" width="13" height="13" style="left:362.20px;top:53.30px"><path d="M1 8l2.200-3h11.500v6H3.200z" fill="#dcdad2" stroke="#c6c4ba" stroke-width=".7"/><text x="4.300" y="10" font-size="5" font-weight="bold" font-family="Liberation Sans, sans-serif" fill="#f3f3f3">abc</text></svg>
<svg viewBox="0 0 16 16" width="13" height="13" style="left:379.00px;top:53.30px"><circle cx="6.500" cy="6.500" r="5.500" fill="#d9d9d9"/><path d="M6.500 6.500V1a5.500 5.500 0 0 1 5.500 5.500z" fill="#c4c4c4"/><rect x="9" y="10" width="5.500" height="4.500" fill="#cfcfcf"/></svg>
<div class="a" style="left:397.10px;top:53.80px;width:1px;height:12px;background:#e0e0e0"></div>
<svg viewBox="0 0 16 16" width="13" height="13" style="left:401.80px;top:53.30px"><path d="M1 8l2.200-3h11.500v6H3.200z" fill="#9cc0ea" stroke="#3f79c2" stroke-width=".7"/><text x="4.300" y="10" font-size="5" font-weight="bold" font-family="Liberation Sans, sans-serif" fill="#1f3f66">abc</text><circle cx="12" cy="12.300" r="3" fill="#b3261e"/><circle cx="12" cy="12.300" r="1" fill="#f0c0c0"/></svg>
<svg viewBox="0 0 16 16" width="13" height="13" style="left:418.80px;top:53.30px"><path d="M1 8l2.200-3h11.500v6H3.200z" fill="#e8413c" stroke="#c62828" stroke-width=".7"/><text x="4.300" y="10" font-size="5" font-weight="bold" font-family="Liberation Sans, sans-serif" fill="#ffffff">abc</text></svg>
<div class="a" style="left:436.10px;top:53.80px;width:1px;height:12px;background:#e0e0e0"></div>
<svg viewBox="0 0 16 16" width="13" height="13" style="left:440.90px;top:53.30px"><path d="M1 8l2.200-3h11.500v6H3.200z" fill="#dcdad2" stroke="#c6c4ba" stroke-width=".7"/><text x="4.300" y="10" font-size="5" font-weight="bold" font-family="Liberation Sans, sans-serif" fill="#f3f3f3">abc</text><circle cx="12" cy="12" r="2.600" fill="#d4d4d4"/></svg>
<svg viewBox="0 0 16 16" width="13" height="13" style="left:458.50px;top:53.30px"><path d="M1 8l2.200-3h11.500v6H3.200z" fill="#dcdad2" stroke="#c6c4ba" stroke-width=".7"/><text x="4.300" y="10" font-size="5" font-weight="bold" font-family="Liberation Sans, sans-serif" fill="#f3f3f3">abc</text><rect x="9.500" y="10" width="5.500" height="4.500" fill="#f6f6f6" stroke="#cfcfcf" stroke-width=".6"/></svg>
<svg viewBox="0 0 16 16" width="13" height="13" style="left:476.50px;top:53.30px"><path d="M1 8l2.200-3h11.500v6H3.200z" fill="#dcdad2" stroke="#c6c4ba" stroke-width=".7"/><text x="4.300" y="10" font-size="5" font-weight="bold" font-family="Liberation Sans, sans-serif" fill="#f3f3f3">abc</text><circle cx="12" cy="12" r="2.600" fill="#d4d4d4"/></svg>
<svg viewBox="0 0 16 16" width="13" height="13" style="left:494.00px;top:53.30px"><path d="M1 8l2.200-3h11.500v6H3.200z" fill="#dcdad2" stroke="#c6c4ba" stroke-width=".7"/><text x="4.300" y="10" font-size="5" font-weight="bold" font-family="Liberation Sans, sans-serif" fill="#f3f3f3">abc</text><rect x="9.500" y="10" width="5.500" height="4.500" fill="#f6f6f6" stroke="#cfcfcf" stroke-width=".6"/></svg>
<svg viewBox="0 0 16 16" width="13" height="13" style="left:511.50px;top:53.30px"><path d="M1 8l2.200-3h11.500v6H3.200z" fill="#dcdad2" stroke="#c6c4ba" stroke-width=".7"/><text x="4.300" y="10" font-size="5" font-weight="bold" font-family="Liberation Sans, sans-serif" fill="#f3f3f3">abc</text><circle cx="12" cy="12" r="2.600" fill="#d4d4d4"/></svg>
<svg viewBox="0 0 3.500 12" width="3.500" height="12" style="left:531.55px;top:53.80px" fill="#cbcbcb"><rect x=".2" y="0.8" width="1" height="1"/><rect x="2.300" y="0.8" width="1" height="1"/><rect x=".2" y="3.0999999999999996" width="1" height="1"/><rect x="2.300" y="3.0999999999999996" width="1" height="1"/><rect x=".2" y="5.3999999999999995" width="1" height="1"/><rect x="2.300" y="5.3999999999999995" width="1" height="1"/><rect x=".2" y="7.699999999999999" width="1" height="1"/><rect x="2.300" y="7.699999999999999" width="1" height="1"/><rect x=".2" y="10.0" width="1" height="1"/><rect x="2.300" y="10.0" width="1" height="1"/></svg>
<svg viewBox="0 0 16 16" width="13" height="13" style="left:539.10px;top:53.30px"><circle cx="7.500" cy="7.500" r="6.800" fill="#4a86c8" stroke="#2f5f9e" stroke-width=".6"/><path d="M7.500.7v13.600M.7 7.500h13.600M2.500 3.300c3 1.600 7 1.600 10 0M2.500 11.700c3-1.600 7-1.600 10 0" fill="none" stroke="#cfe0f3" stroke-width=".7"/><ellipse cx="7.500" cy="7.500" rx="3.200" ry="6.800" fill="none" stroke="#cfe0f3" stroke-width=".7"/><rect x="9.500" y="9.500" width="6" height="6" rx="1" fill="#4a9a4a"/><path d="M11 11l3 1.500-3 1.500z" fill="#222"/></svg>
<svg viewBox="0 0 16 16" width="13" height="13" style="left:557.10px;top:53.30px"><circle cx="7.500" cy="7.500" r="6.800" fill="#4a86c8" stroke="#2f5f9e" stroke-width=".6"/><path d="M7.500.7v13.600M.7 7.500h13.600M2.500 3.300c3 1.600 7 1.600 10 0M2.500 11.700c3-1.600 7-1.600 10 0" fill="none" stroke="#cfe0f3" stroke-width=".7"/><ellipse cx="7.500" cy="7.500" rx="3.200" ry="6.800" fill="none" stroke="#cfe0f3" stroke-width=".7"/><rect x="9.500" y="9.500" width="6" height="6" rx="1" fill="#4a9a4a"/><path d="M11 14l3-3M11 11l3 3" stroke="#dff0df" stroke-width=".8"/></svg>
<svg viewBox="0 0 3.500 12" width="3.500" height="12" style="left:575.25px;top:53.80px" fill="#cbcbcb"><rect x=".2" y="0.8" width="1" height="1"/><rect x="2.300" y="0.8" width="1" height="1"/><rect x=".2" y="3.0999999999999996" width="1" height="1"/><rect x="2.300" y="3.0999999999999996" width="1" height="1"/><rect x=".2" y="5.3999999999999995" width="1" height="1"/><rect x="2.300" y="5.3999999999999995" width="1" height="1"/><rect x=".2" y="7.699999999999999" width="1" height="1"/><rect x="2.300" y="7.699999999999999" width="1" height="1"/><rect x=".2" y="10.0" width="1" height="1"/><rect x="2.300" y="10.0" width="1" height="1"/></svg>
<svg viewBox="0 0 16 16" width="13" height="13" style="left:584.00px;top:53.30px"><path d="M7.800 1C5 1 5 2.300 5 3.300V5h3.200v.7H3.300C1.800 5.700 1 6.800 1 8.500s.8 2.800 2.200 2.800H5V9.200c0-1.300 1-2.200 2.200-2.200h3c1 0 1.800-.8 1.800-1.800v-2C12 1.800 10.600 1 7.800 1z" fill="#3b77a8"/><path d="M8.200 15c2.800 0 2.800-1.300 2.800-2.300V11H7.800v-.7h4.900c1.500 0 2.300-1.100 2.300-2.800s-.8-2.800-2.200-2.800H11v2.100c0 1.300-1 2.200-2.200 2.200h-3c-1 0-1.800.8-1.800 1.800v2c0 1.400 1.400 2.200 4.200 2.200z" fill="#f2c83a"/><path d="M11 13.500l3 1-3 1" fill="none" stroke="#222" stroke-width=".7"/></svg>
<svg viewBox="0 0 16 16" width="13" height="13" style="left:601.20px;top:53.30px"><path d="M1 13.500L3.500 5h3l.5 2h2l.5-2h3L15 13.500c.3 1.500-5 1.500-5 0L9.500 10h-3L6 13.500c0 1.500-5.300 1.500-5 0z" fill="#2a2a2a"/><path d="M4 4.600V2.500h2.500v2.100M9.500 4.600V2.500H12v2.100" fill="#444"/><circle cx="3.600" cy="13" r="1.500" fill="#b33"/><circle cx="12.400" cy="13" r="1.500" fill="#b33"/></svg>
<svg viewBox="0 0 3.500 12" width="3.500" height="12" style="left:620.25px;top:53.80px" fill="#cbcbcb"><rect x=".2" y="0.8" width="1" height="1"/><rect x="2.300" y="0.8" width="1" height="1"/><rect x=".2" y="3.0999999999999996" width="1" height="1"/><rect x="2.300" y="3.0999999999999996" width="1" height="1"/><rect x=".2" y="5.3999999999999995" width="1" height="1"/><rect x="2.300" y="5.3999999999999995" width="1" height="1"/><rect x=".2" y="7.699999999999999" width="1" height="1"/><rect x="2.300" y="7.699999999999999" width="1" height="1"/><rect x=".2" y="10.0" width="1" height="1"/><rect x="2.300" y="10.0" width="1" height="1"/></svg>
<svg viewBox="0 0 16 16" width="13" height="13" style="left:628.90px;top:53.30px"><path d="M3.200 2.500l-1.500 4c-1.200 4 1.500 7 5 7s6.200-2.500 6-6.500l-3.200-.6c.2 2.300-1 3.700-2.800 3.700S4.200 8.800 5 7l1.300-3.500z" fill="#c62828" transform="rotate(35 8 8)"/><path d="M10.500 1.200l2.800 1.800-1 1.600-2.800-1.800zM13.600 4.300l1.600 2.900-1.600.9-1.600-2.900z" fill="#e8e8e8" stroke="#999" stroke-width=".4"/></svg>
<svg viewBox="0 0 16 16" width="13" height="13" style="left:646.50px;top:53.30px"><path d="M2 3l5 9 4-9" fill="none" stroke="#c9c9c9" stroke-width="1"/><path d="M10 6h4M10 8.500h4M10 11h4" stroke="#c9c9c9" stroke-width=".8"/><path d="M10.500 13h4l-2 2z" fill="#b5b5b5"/></svg>
<svg viewBox="0 0 16 16" width="13" height="13" style="left:801.00px;top:53.30px"><path d="M8 15V8M8 8L2 3M8 8l7-2" fill="none" stroke="#4a9a4a" stroke-width="1.500"/><circle cx="8" cy="8" r="1.500" fill="#777"/></svg>
<svg viewBox="0 0 16 16" width="13" height="13" style="left:818.90px;top:53.30px"><path d="M6 3h7c1.500 0 2 1 2 2.500v5H9z" fill="#a8a8a8" stroke="#666" stroke-width=".6"/><path d="M1.500 5c0-2 2-3.500 4.500-3l2 4 1.500 3 1 5.500H6L4 10 2 8.500z" fill="#7fb86a" stroke="#3f7a34" stroke-width=".8"/><path d="M11 13.500h4l-2 2z" fill="#222"/></svg>
<svg viewBox="0 0 16 16" width="13" height="13" style="left:836.10px;top:53.30px"><path d="M2 2l12 12M14 2L2 14" stroke="#c9c9c9" stroke-width="1.100"/></svg>
<svg viewBox="0 0 16 16" width="13" height="13" style="left:853.50px;top:53.30px"><path d="M2 2c3 4 3 8 0 12M14 2c-3 4-3 8 0 12M2 2l12 12M14 2L2 14" fill="none" stroke="#cfc8b4" stroke-width="1.100"/></svg>
<svg viewBox="0 0 6 4" width="5" height="3" style="left:870.20px;top:58.80px"><path d="M0 0h6L3 4z" fill="#9a9a9a"/></svg>
<svg viewBox="0 0 16 16" width="13" height="13" style="left:878.50px;top:53.30px"><path d="M3 13l2-9 6 8 2-9" fill="none" stroke="#d2d0c8" stroke-width="1.600"/></svg>
<svg viewBox="0 0 3.500 12" width="3.500" height="12" style="left:899.85px;top:53.80px" fill="#cbcbcb"><rect x=".2" y="0.8" width="1" height="1"/><rect x="2.300" y="0.8" width="1" height="1"/><rect x=".2" y="3.0999999999999996" width="1" height="1"/><rect x="2.300" y="3.0999999999999996" width="1" height="1"/><rect x=".2" y="5.3999999999999995" width="1" height="1"/><rect x="2.300" y="5.3999999999999995" width="1" height="1"/><rect x=".2" y="7.699999999999999" width="1" height="1"/><rect x="2.300" y="7.699999999999999" width="1" height="1"/><rect x=".2" y="10.0" width="1" height="1"/><rect x="2.300" y="10.0" width="1" height="1"/></svg>
<svg viewBox="0 0 16 16" width="13" height="13" style="left:907.20px;top:53.30px"><path d="M2 1.500V14h13" fill="none" stroke="#333" stroke-width="1"/><path d="M3.500 12c3 0 3.500-3 6-4s3-3 5-5" fill="none" stroke="#b0359a" stroke-width="1.100"/><path d="M3.500 12.500c3-.5 5-2.500 7-2.500s3 .5 4.500-.5" fill="none" stroke="#3f86d2" stroke-width="1"/></svg>
<svg viewBox="0 0 16 16" width="13" height="13" style="left:663.50px;top:53.30px"><circle cx="4" cy="4" r="1.200" fill="#bdbdbd"/><circle cx="10" cy="3" r="1.200" fill="#bdbdbd"/><circle cx="6" cy="10" r="1.200" fill="#bdbdbd"/><circle cx="12" cy="9" r="1.200" fill="#bdbdbd"/><path d="M10.500 13h4l-2 2z" fill="#9a9a9a"/></svg>
<div class="a" style="left:679.800px;top:53.300px;width:57.300px;height:14px;background:#f3f3f3;border:1px solid #d0d0d0;box-sizing:border-box"></div>
<span class="t" style="left:683.00px;top:54.30px;letter-spacing:-0.300px;color:#8a8a8a;">12</span>
<svg viewBox="0 0 6 10" width="4.500" height="8" style="left:730px;top:56.300px"><path d="M0 4l3-3.500L6 4zM0 6l3 3.500L6 6z" fill="#8a8a8a"/></svg>
<div class="a" style="left:738.400px;top:53.300px;width:59.300px;height:14px;background:#f3f3f3;border:1px solid #d0d0d0;box-sizing:border-box;border-radius:1px"></div>
<span class="t" style="left:741.00px;top:54.30px;letter-spacing:-0.300px;color:#8a8a8a;">px</span>
<svg viewBox="0 0 6 4" width="5" height="3" style="left:787.50px;top:59.00px"><path d="M0 0h6L3 4z" fill="#8a8a8a"/></svg>
<div class="a" style="left:0;top:71px;width:28.500px;height:487px;background:linear-gradient(90deg,#f6f6f6,#ececec)"></div>
<div class="a" style="left:28px;top:71px;width:1px;height:487px;background:#fbfbfb"></div>
<div class="a" style="left:10.500px;top:74.800px;width:9px;height:1.500px;background:repeating-linear-gradient(90deg,#f0f0f0 0 1px,#d9d9d9 1px 2px)"></div>
<svg viewBox="0 0 16 16" width="16" height="16" style="left:6.5px;top:80px"><path d="M2 14h12V2z" fill="#e3e1d8" stroke="#d1cfc6" stroke-width=".9"/><path d="M6 12h6V6z" fill="#f2f2f2" stroke="#d1cfc6" stroke-width=".6"/></svg>
<svg viewBox="0 0 16 16" width="16" height="16" style="left:4px;top:96px"><circle cx="3" cy="4" r="1.300" fill="#d4d4d4"/><circle cx="7.500" cy="2" r="1.300" fill="#d4d4d4"/><circle cx="12" cy="4" r="1.300" fill="#d4d4d4"/><rect x="5" y="7.500" width="6.500" height="6.500" fill="#f4f4f4" stroke="#cfcfcf" stroke-width="1"/></svg>
<svg viewBox="0 0 16 16" width="16" height="16" style="left:6.5px;top:113px"><path d="M2 6c0-3 4-4 7-3s4 4 1 5-3 2-5 2-3-1-3-4z" fill="#dbdbdb" stroke="#cacaca" stroke-width=".8"/><rect x="9" y="9" width="6" height="6" fill="#f3f3f3" stroke="#c8c8c8" stroke-width=".9"/></svg>
<svg viewBox="0 0 16 16" width="16" height="16" style="left:6.5px;top:130.5px"><path d="M2 7c0-4 5-5 8-3s3 6 0 7-8 1-8-4z" fill="#dbdbdb" stroke="#cacaca" stroke-width=".8"/><circle cx="8" cy="8" r="2" fill="#ececec" stroke="#d0d0d0" stroke-width=".6"/></svg>
<svg viewBox="0 0 16 16" width="16" height="16" style="left:6.5px;top:148px"><path d="M2 6c0-3 4-4 7-3s4 4 1 5-3 2-5 2-3-1-3-4z" fill="#dbdbdb" stroke="#cacaca" stroke-width=".8"/><circle cx="6" cy="6" r="1.500" fill="#f2f2f2"/><rect x="9" y="9" width="6" height="6" fill="#f3f3f3" stroke="#c8c8c8" stroke-width=".9"/></svg>
<svg viewBox="0 0 16 16" width="16" height="16" style="left:6.5px;top:165.5px"><path d="M2 7c0-3 3-5 6-4 4 0 5 4 3 6s-3 3-6 2-3-2-3-4z" fill="#dbdbdb" stroke="#cacaca" stroke-width=".8"/><rect x="9" y="9" width="6" height="6" fill="#f3f3f3" stroke="#c8c8c8" stroke-width=".9"/></svg>
<svg viewBox="0 0 16 16" width="16" height="16" style="left:6.5px;top:183px"><path d="M2 6c0-3 4-4 7-3s4 4 1 5-3 2-5 2-3-1-3-4z" fill="#dbdbdb" stroke="#cacaca" stroke-width=".8"/><rect x="9" y="9" width="6" height="6" fill="#f3f3f3" stroke="#c8c8c8" stroke-width=".9"/></svg>
<svg viewBox="0 0 16 16" width="16" height="16" style="left:6.5px;top:200px"><path d="M2 6c0-3 4-4 7-3s4 4 1 5-3 2-5 2-3-1-3-4z" fill="#dbdbdb" stroke="#cacaca" stroke-width=".8"/><rect x="9" y="9" width="6" height="6" fill="#f3f3f3" stroke="#c8c8c8" stroke-width=".9"/></svg>
<svg viewBox="0 0 16 16" width="16" height="16" style="left:6.5px;top:217.5px"><path d="M2 7c0-3 3-5 6-4 4 0 5 4 3 6s-3 3-6 2-3-2-3-4z" fill="#dbdbdb" stroke="#cacaca" stroke-width=".8"/><rect x="9" y="9" width="6" height="6" fill="#f3f3f3" stroke="#c8c8c8" stroke-width=".9"/></svg>
<svg viewBox="0 0 16 16" width="16" height="16" style="left:6.5px;top:234px"><path d="M2 5c0-3 5-4 8-3s5 4 2 5l-4 1v4c0 2-4 2-4 0V9c-2-1-2-2-2-4z" fill="#d9d7cf" stroke="#cfcdc4" stroke-width=".8"/></svg>
<svg viewBox="0 0 16 16" width="16" height="16" style="left:6.5px;top:250.5px"><path d="M3 12c-3-3 0-7 4-9s8 0 6 3-3 3-5 5-3 3-5 1z" fill="#d9d7cf" stroke="#cfcdc4" stroke-width=".8"/></svg>
<svg viewBox="0 0 16 16" width="16" height="16" style="left:6.5px;top:267px"><path d="M2 3l5 9 4-9" fill="none" stroke="#d0d0d0" stroke-width="1.100"/><rect x="9" y="9" width="6" height="6" fill="#f3f3f3" stroke="#c8c8c8" stroke-width=".9"/></svg>
<svg viewBox="0 0 16 16" width="16" height="16" style="left:6.5px;top:283.5px"><path d="M7 1v14M2 5h10M2 11h8" stroke="#d6d6d6" stroke-width="1.100" fill="none"/><rect x="9" y="2" width="4" height="4" fill="#eee" stroke="#d0d0d0" stroke-width=".7"/></svg>
<svg viewBox="0 0 16 16" width="16" height="16" style="left:6.5px;top:300px"><path d="M2 4c2-2 5-2 6 0 1-2 4-2 6 0 0 3-2 5-5 5H7C4 9 2 7 2 4z" fill="#dbdbdb" stroke="#cacaca" stroke-width=".8"/><path d="M6 9l4 5M10 9l-4 5" stroke="#d0d0d0" stroke-width="1"/></svg>
<svg viewBox="0 0 16 16" width="16" height="16" style="left:6.5px;top:317.5px"><path d="M2 4c2-2 5-2 6 0 1-2 4-2 6 0 0 3-2 5-5 5H7C4 9 2 7 2 4z" fill="#dbdbdb" stroke="#cacaca" stroke-width=".8"/><path d="M6 9l4 5M10 9l-4 5" stroke="#d0d0d0" stroke-width="1"/></svg>
<svg viewBox="0 0 16 16" width="16" height="16" style="left:6.5px;top:334.5px"><path d="M2 4c2-2 5-2 6 0 1-2 4-2 6 0 0 3-2 5-5 5H7C4 9 2 7 2 4z" fill="#dbdbdb" stroke="#cacaca" stroke-width=".8"/><path d="M7 9l4 5" stroke="#d0d0d0" stroke-width="1"/></svg>
<svg viewBox="0 0 16 16" width="16" height="16" style="left:6.5px;top:351.5px"><path d="M3 3h10M3 7h10M3 11h10M8 1v14" stroke="#dcdcdc" stroke-width="1.100" fill="none"/></svg>
<svg viewBox="0 0 16 16" width="16" height="16" style="left:6.5px;top:369px"><path d="M4 13c-3-3-2-8 3-10l-1 4 6-1c1 4-4 9-8 7z" fill="#e9e9e9" stroke="#d2d2d2" stroke-width=".9"/></svg>
<svg viewBox="0 0 6 4" width="5" height="3" style="left:21.00px;top:104.50px"><path d="M0 0h6L3 4z" fill="#b0b0b0"/></svg>
<svg viewBox="0 0 6 4" width="5" height="3" style="left:20.00px;top:376.50px"><path d="M0 0h6L3 4z" fill="#b0b0b0"/></svg>
<div class="a" style="left:9px;top:390.500px;width:10px;height:2px;background:repeating-linear-gradient(90deg,#f0f0f0 0 1px,#d9d9d9 1px 2px)"></div>
<svg viewBox="0 0 16 16" width="14" height="14" style="left:7.500px;top:396.500px"><path d="M3 3.600C6 2 11 2 13.600 3.600 14 6.200 12 8 9.200 8.600L7.200 12.200C4 11 2.500 7 3 3.600z" fill="#4a86c8" stroke="#2f6fb0" stroke-width=".6"/><path d="M2.200 2.600L7.800 5.800M2.400 13.600L6 9" stroke="#3a78c4" stroke-width=".6" fill="none"/><path d="M8.800 10.200l1.400 4.300 4.300-5.800" fill="none" stroke="#e4b31e" stroke-width="1.700" stroke-linejoin="round"/><path d="M13.700 9.700l1.200-1.700" stroke="#555" stroke-width="1.300"/><g fill="#f5c518" stroke="#3a78c4" stroke-width=".6"><circle cx="2.200" cy="2.600" r="1.500"/><circle cx="13.400" cy="2.600" r="1.500"/><circle cx="2.400" cy="13.600" r="1.500"/><circle cx="7.800" cy="5.800" r="1.300"/></g></svg>
<div class="a" style="left:0;top:558px;width:1024px;height:18px;background:#f0f0f0"></div>
<div class="a" style="left:0;top:574.500px;width:1024px;height:1.500px;background:#111"></div>
<div class="a" style="left:2.5px;top:559.500px;width:161.25px;height:14px;background:#fff;border:1px solid #c9c9c9;box-sizing:border-box;border-radius:1px"></div>
<svg viewBox="0 0 10 10" width="7" height="7" style="left:6.500px;top:563px"><circle cx="4" cy="4" r="2.800" fill="none" stroke="#8a8a8a" stroke-width="1.100"/><path d="M6 6l3 3" stroke="#8a8a8a" stroke-width="1.300"/></svg>
<span class="t" style="left:17.50px;top:560.80px;letter-spacing:-0.271px;color:#7d7d7d;">Digita per localizzare (Ctrl+K)</span>
<span class="t" style="left:168.75px;top:560.80px;letter-spacing:-0.112px;color:#1c1c1c;">Pronto</span>
<span class="t" style="left:419.50px;top:560.80px;letter-spacing:-0.245px;color:#1c1c1c;">Coordinata</span>
<div class="a" style="left:462px;top:559.500px;width:58.5px;height:14px;background:#fff;border:1px solid #c9c9c9;box-sizing:border-box;border-radius:1px"></div>
<span class="t" style="left:467.50px;top:560.80px;letter-spacing:-0.201px;color:#1c1c1c;">-1.687,0.333</span>
<svg viewBox="0 0 12 12" width="10.500" height="10.500" style="left:522.300px;top:561.300px"><circle cx="6" cy="6" r="4" fill="none" stroke="#222" stroke-width="1.200"/><path d="M1 2l10 8M3 6h6M6 2v8" stroke="#222" stroke-width="1"/><circle cx="9" cy="9.500" r="1.800" fill="#333"/></svg>
<span class="t" style="left:540.00px;top:560.80px;letter-spacing:-0.653px;color:#1c1c1c;">Scala</span>
<div class="a" style="left:560.5px;top:559.500px;width:57.5px;height:14px;background:#fff;border:1px solid #c9c9c9;box-sizing:border-box;border-radius:1px"></div>
<span class="t" style="left:562.00px;top:560.80px;letter-spacing:-0.339px;color:#1c1c1c;">195255824</span>
<svg viewBox="0 0 6 4" width="5" height="3" style="left:608.25px;top:565.50px"><path d="M0 0h6L3 4z" fill="#444"/></svg>
<svg viewBox="0 0 10 12" width="8" height="9.500" style="left:624.700px;top:562px"><path d="M2.500 6V3.500a2.500 2.500 0 0 1 5 0V6" fill="none" stroke="#8a8a8a" stroke-width="1.300"/><rect x="1" y="5.500" width="8" height="6" rx=".8" fill="#7c7c7c"/></svg>
<span class="t" style="left:638.75px;top:560.80px;letter-spacing:-0.180px;color:#1c1c1c;">Lente d&#x27;ingrandimento</span>
<div class="a" style="left:724.4px;top:559.500px;width:48.60000000000002px;height:14px;background:#fff;border:1px solid #c9c9c9;box-sizing:border-box;border-radius:1px"></div>
<span class="t" style="left:727.40px;top:560.80px;letter-spacing:-0.275px;color:#1c1c1c;">100%</span>
<svg viewBox="0 0 6 10" width="4.500" height="8.500" style="left:766.4px;top:562.500px"><path d="M0 4l3-3.500L6 4zM0 6l3 3.500L6 6z" fill="#555"/></svg>
<span class="t" style="left:778.70px;top:560.80px;letter-spacing:-0.369px;color:#1c1c1c;">Rotazione</span>
<div class="a" style="left:820px;top:559.500px;width:47.60000000000002px;height:14px;background:#fff;border:1px solid #c9c9c9;box-sizing:border-box;border-radius:1px"></div>
<span class="t" style="left:823.00px;top:560.80px;letter-spacing:-0.121px;color:#1c1c1c;">0,0 °</span>
<svg viewBox="0 0 6 10" width="4.500" height="8.500" style="left:861px;top:562.500px"><path d="M0 4l3-3.500L6 4zM0 6l3 3.500L6 6z" fill="#555"/></svg>
<div class="a" style="left:871px;top:562.500px;width:8.500px;height:8.500px;background:#fff;border:1px solid #d2d2d2;box-sizing:border-box"></div>
<svg viewBox="0 0 10 10" width="7" height="7" style="left:871.800px;top:563.200px"><path d="M1.300 4.800l2.700 3.400 4.700-7.400" fill="none" stroke="#000" stroke-width="1.800"/></svg>
<span class="t" style="left:883.70px;top:560.80px;letter-spacing:-0.385px;color:#1c1c1c;">Visualizza</span>
<svg viewBox="0 0 14 12" width="11" height="9.500" style="left:928px;top:562px"><ellipse cx="7" cy="6.500" rx="6" ry="3.300" fill="none" stroke="#555" stroke-width="1"/><circle cx="7" cy="5.500" r="4" fill="#7a7a7a" stroke="#444" stroke-width=".6"/><path d="M3 5.500h8M7 1.500v8" stroke="#ddd" stroke-width=".6"/></svg>
<span class="t" style="left:941.00px;top:560.80px;letter-spacing:-0.608px;color:#1c1c1c;">EPSG:3857</span>
<svg viewBox="0 0 14 12" width="11" height="9.500" style="left:993px;top:562.500px"><path d="M1 5c0-2.500 2.500-4 6-4s6 1.500 6 4-2.500 4-6 4l-3.500 2.500.5-3C2 8 1 6.500 1 5z" fill="#4a4a4a"/><circle cx="4.500" cy="5" r=".8" fill="#eee"/><circle cx="7" cy="5" r=".8" fill="#eee"/><circle cx="9.500" cy="5" r=".8" fill="#eee"/></svg>
<svg viewBox="0 0 14 14" width="11" height="11" style="left:1011px;top:561.500px"><path d="M2 6h7l3 2v5H2z" fill="#8f8f8f" stroke="#666" stroke-width=".6"/><path d="M8 5l3-3.500 1.500 2.500 1.500-1-1 4z" fill="#b5b5b5" stroke="#666" stroke-width=".5"/></svg><div class="a" style="left:203px;top:71px;width:821px;height:487px;background:#fff;border-left:1px solid #c2c2c2;box-sizing:border-box"></div>
<div class="a" style="left:29.500px;top:71px;width:173.500px;height:487px;background:#f0f0f0"></div>
<span class="t" style="left:31.75px;top:72.00px;letter-spacing:-0.645px;color:#1c1c1c;">Browser</span>
<svg viewBox="0 0 14 6.500" width="14" height="6.500" style="left:185px;top:73.75px"><rect x="0" y="0" width="6" height="6.300" rx=".8" fill="#8e8e8e"/><path d="M1.300 4.900l3.300-3.400" stroke="#f4f4f4" stroke-width="1"/><rect x="3.600" y=".9" width="1.500" height="1.500" fill="#f4f4f4"/><rect x=".9" y="3.900" width="1.500" height="1.500" fill="#f4f4f4"/><rect x="7.300" y="0" width="6.400" height="6.300" rx="1.800" fill="#8e8e8e"/><path d="M8.600 1.100c.9 1.400.9 2.800 0 4.100M12.400 1.100c-.9 1.400-.9 2.800 0 4.100" fill="none" stroke="#f0f0f0" stroke-width=".9"/><path d="M9.500 1.700l2 2.900M11.500 1.700l-2 2.900" stroke="#3c3c3c" stroke-width=".9"/></svg>
<svg viewBox="0 0 16 16" width="10.5" height="10.5" style="left:32.25px;top:86.05px"><rect x="1.500" y="1.500" width="10" height="10" fill="#fff" stroke="#7a7a7a" stroke-width=".9"/><circle cx="12" cy="12" r="3" fill="#58a058"/><path d="M10.500 12h3M12 10.500v3" stroke="#fff" stroke-width=".8"/></svg>
<svg viewBox="0 0 16 16" width="10.5" height="10.5" style="left:46.00px;top:86.05px"><path d="M13.6 6.6A6 6 0 0 0 3 5.2" fill="none" stroke="#3f8bd8" stroke-width="2.6"/><path d="M.8 3l1.4 5 4.6-2.4z" fill="#3f8bd8"/><path d="M2.4 9.4A6 6 0 0 0 13 10.8" fill="none" stroke="#3f8bd8" stroke-width="2.6"/><path d="M15.2 13l-1.4-5-4.6 2.4z" fill="#3f8bd8"/></svg>
<svg viewBox="0 0 16 16" width="10.5" height="10.5" style="left:59.25px;top:86.05px"><path d="M1.500 2h13L9.500 8v6.500l-3-1.500V8z" fill="#4a8fd0" stroke="#2f6fb0" stroke-width=".6"/><path d="M1.500 2h13v1.800h-13z" fill="#e9c13a"/></svg>
<svg viewBox="0 0 16 16" width="10.5" height="10.5" style="left:72.75px;top:86.05px"><rect x="2.500" y="4" width="7" height="9.500" fill="#f7f7f7" stroke="#8a8a8a" stroke-width=".8"/><rect x="3.300" y="6" width="2.200" height="5.500" fill="#e9c13a"/><path d="M10 14V6.500M6.800 8.300L10 3.800l3.200 4.500z" fill="#2f6fc0" stroke="#2f6fc0" stroke-width="1.300"/></svg>
<svg viewBox="0 0 16 16" width="10.5" height="10.5" style="left:86.00px;top:86.05px"><circle cx="8" cy="8" r="6.500" fill="#4a86c8"/><text x="6.200" y="12" font-size="10" font-weight="bold" font-style="italic" font-family="Liberation Serif, serif" fill="#fff">i</text></svg>
<div class="a" style="left:30px;top:99.500px;width:170px;height:229.500px;background:#fff;border:1px solid #dcdcdc;box-sizing:border-box;overflow:hidden"></div>
<div class="a" style="left:0;top:100px;width:190px;height:228.500px;overflow:hidden"><div class="a" style="left:0;top:-100px"><svg viewBox="0 0 16 16" width="11.5" height="11.5" style="left:43.95px;top:100.50px"><path d="M8 .8l2.200 4.700 5 .6-3.700 3.500 1 5.100L8 12.200l-4.500 2.500 1-5.100L.8 6.100l5-.6z" fill="#f7d438" stroke="#d9a520" stroke-width=".8"/></svg><span class="t" style="left:58.75px;top:100.45px;letter-spacing:-0.118px;color:#1c1c1c;">Preferiti</span><svg viewBox="0 0 4 6" width="3.200" height="5" style="left:35.00px;top:116.00px"><path d="M0 0l4 3-4 3z" fill="#5a5a5a"/></svg><svg viewBox="0 0 16 16" width="11.5" height="11.5" style="left:43.95px;top:112.75px"><path d="M2.500 2h11v12H4c-1 0-1.500-.5-1.500-1.500z" fill="#e3e3e3" stroke="#8a8a8a" stroke-width=".8"/><path d="M4.600 2v12" stroke="#a5a5a5" stroke-width=".6"/><path d="M8.500 2h3v6l-1.500-1.400L8.500 8z" fill="#3f79c2"/></svg><span class="t" style="left:58.75px;top:112.70px;letter-spacing:-0.362px;color:#1c1c1c;">Segnalibri Spaziali</span><svg viewBox="0 0 4 6" width="3.200" height="5" style="left:35.00px;top:128.26px"><path d="M0 0l4 3-4 3z" fill="#5a5a5a"/></svg><svg viewBox="0 0 16 16" width="11.5" height="11.5" style="left:43.95px;top:125.01px"><path d="M1.500 2.800h5l1 1.500h7V14.200h-13z" fill="#f4f4f4" stroke="#6a6a6a" stroke-width=".9"/><path d="M5.200 12V9L8.200 6.300l3 2.700V12z" fill="#fff" stroke="#222" stroke-width="1.200"/></svg><span class="t" style="left:58.75px;top:124.96px;letter-spacing:-0.367px;color:#1c1c1c;">Home</span><svg viewBox="0 0 4 6" width="3.200" height="5" style="left:35.00px;top:140.51px"><path d="M0 0l4 3-4 3z" fill="#5a5a5a"/></svg><svg viewBox="0 0 16 16" width="11.5" height="11.5" style="left:43.95px;top:137.26px"><path d="M1.500 2.800h5l1 1.500h7V14.200h-13z" fill="#efefef" stroke="#7e7e7e" stroke-width=".9"/></svg><span class="t" style="left:58.75px;top:137.21px;letter-spacing:-0.083px;color:#1c1c1c;">C:\</span><svg viewBox="0 0 4 6" width="3.200" height="5" style="left:35.00px;top:152.77px"><path d="M0 0l4 3-4 3z" fill="#5a5a5a"/></svg><svg viewBox="0 0 16 16" width="11.5" height="11.5" style="left:43.95px;top:149.52px"><path d="M1.500 2.800h5l1 1.500h7V14.200h-13z" fill="#efefef" stroke="#7e7e7e" stroke-width=".9"/></svg><span class="t" style="left:58.75px;top:149.47px;letter-spacing:0.083px;color:#1c1c1c;">D:\</span><svg viewBox="0 0 4 6" width="3.200" height="5" style="left:35.00px;top:165.03px"><path d="M0 0l4 3-4 3z" fill="#5a5a5a"/></svg><svg viewBox="0 0 16 16" width="11.5" height="11.5" style="left:43.95px;top:161.78px"><path d="M1.500 2.800h5l1 1.500h7V14.200h-13z" fill="#efefef" stroke="#7e7e7e" stroke-width=".9"/></svg><span class="t" style="left:58.75px;top:161.72px;letter-spacing:0.078px;color:#1c1c1c;">E:\</span><svg viewBox="0 0 4 6" width="3.200" height="5" style="left:35.00px;top:177.28px"><path d="M0 0l4 3-4 3z" fill="#5a5a5a"/></svg><svg viewBox="0 0 16 16" width="11.5" height="11.5" style="left:43.95px;top:174.03px"><path d="M1.500 6l6.500-3.500 6.500 3.500v6l-6.500 3-6.500-3z" fill="#e8c02e" stroke="#a8861a" stroke-width=".7"/><path d="M1.500 6l6.500 3 6.500-3-6.500-3.500z" fill="#3f79c2" stroke="#2a558c" stroke-width=".5"/><path d="M8 9v6" stroke="#a8861a" stroke-width=".7"/></svg><span class="t" style="left:58.75px;top:173.98px;letter-spacing:-0.662px;color:#1c1c1c;">GeoPackage</span><svg viewBox="0 0 4 6" width="3.200" height="5" style="left:35.00px;top:189.54px"><path d="M0 0l4 3-4 3z" fill="#5a5a5a"/></svg><svg viewBox="0 0 16 16" width="11.5" height="11.5" style="left:43.95px;top:186.29px"><path d="M1.500 15c1-5 4-10.500 12.500-13.500-1 5.500-4.500 10-9.500 11z" fill="#5d8fcc" stroke="#2f5f9e" stroke-width=".7"/><path d="M1.500 15l7-9" stroke="#e8eef6" stroke-width=".6"/></svg><span class="t" style="left:58.75px;top:186.24px;letter-spacing:-0.389px;color:#1c1c1c;">SpatiaLite</span><svg viewBox="0 0 4 6" width="3.200" height="5" style="left:35.00px;top:201.79px"><path d="M0 0l4 3-4 3z" fill="#5a5a5a"/></svg><svg viewBox="0 0 16 16" width="11.5" height="11.5" style="left:43.95px;top:198.54px"><path d="M3 2c4-2 9-1 10 2s-1 5-1 8-2 3-2 0V9c-2 1-5 1-6-1S1 4 3 2z" fill="#4a7fb8" stroke="#2a4f7c" stroke-width=".8"/><circle cx="5.500" cy="5" r=".9" fill="#fff"/><path d="M5 10v4" stroke="#2a4f7c" stroke-width="1.600"/></svg><span class="t" style="left:58.75px;top:198.49px;letter-spacing:-0.609px;color:#1c1c1c;">PostGIS</span><svg viewBox="0 0 4 6" width="3.200" height="5" style="left:35.00px;top:214.05px"><path d="M0 0l4 3-4 3z" fill="#5a5a5a"/></svg><svg viewBox="0 0 16 16" width="11.5" height="11.5" style="left:43.95px;top:210.80px"><circle cx="8" cy="8" r="6.800" fill="#4a86c8" stroke="#2f5f9e" stroke-width=".8"/><path d="M8 1.200v13.600M1.200 8h13.600M3 4c3 1.500 7 1.500 10 0M3 12c3-1.500 7-1.500 10 0" fill="none" stroke="#eaf1fa" stroke-width=".8"/><ellipse cx="8" cy="8" rx="3.200" ry="6.800" fill="none" stroke="#eaf1fa" stroke-width=".8"/><path d="M4 5c1-1 3-1 3 1s-2 1-2 3-2 0-2-2z" fill="#dfe9f5"/></svg><span class="t" style="left:58.75px;top:210.75px;letter-spacing:-0.322px;color:#1c1c1c;">WMS/WMTS</span><svg viewBox="0 0 6 4" width="5" height="3.200" style="left:34.10px;top:227.20px"><path d="M0 0h6L3 4z" fill="#5a5a5a"/></svg><svg viewBox="0 0 16 16" width="11.5" height="11.5" style="left:43.95px;top:223.05px"><rect x="1.500" y="1.500" width="13" height="13" fill="#fff"/><path d="M1.500 5.800h13M1.500 10.200h13M5.800 1.500v13M10.200 1.500v13" stroke="#2e2e2e" stroke-width="1.100"/><rect x="1.500" y="1.500" width="13" height="13" fill="none" stroke="#2e2e2e" stroke-width="1.100"/></svg><span class="t" style="left:58.75px;top:223.00px;letter-spacing:-0.270px;color:#1c1c1c;">Vector Tiles</span><div class="a" style="left:30.500px;top:235.16px;width:124px;height:11.800px;background:#ededed"></div><svg viewBox="0 0 16 16" width="10.5" height="10.5" style="left:58.25px;top:235.81px"><rect x="1.500" y="1.500" width="13" height="13" fill="#7ea6d8"/><path d="M1.500 5.800h13M1.500 10.200h13M5.800 1.500v13M10.200 1.500v13" stroke="#2f5f9e" stroke-width="1.100"/><rect x="1.500" y="1.500" width="13" height="13" fill="none" stroke="#2f5f9e" stroke-width="1.100"/></svg><span class="t" style="left:72.00px;top:235.25px;letter-spacing:-0.389px;color:#1c1c1c;">Qwant VT</span><svg viewBox="0 0 4 6" width="3.200" height="5" style="left:35.00px;top:250.81px"><path d="M0 0l4 3-4 3z" fill="#5a5a5a"/></svg><svg viewBox="0 0 16 16" width="11.5" height="11.5" style="left:43.95px;top:247.56px"><g fill="#3f86d2"><rect x="1.500" y="1.500" width="3.400" height="3.400"/><rect x="6.300" y="1.500" width="3.400" height="3.400"/><rect x="11.100" y="1.500" width="3.400" height="3.400"/><rect x="1.500" y="6.300" width="3.400" height="3.400"/><rect x="6.300" y="6.300" width="3.400" height="3.400"/><rect x="11.100" y="6.300" width="3.400" height="3.400"/><rect x="1.500" y="11.100" width="3.400" height="3.400"/><rect x="6.300" y="11.100" width="3.400" height="3.400"/><rect x="11.100" y="11.100" width="3.400" height="3.400"/></g></svg><span class="t" style="left:58.75px;top:247.51px;letter-spacing:-0.655px;color:#1c1c1c;">XYZ Tiles</span><svg viewBox="0 0 4 6" width="3.200" height="5" style="left:35.00px;top:263.06px"><path d="M0 0l4 3-4 3z" fill="#5a5a5a"/></svg><svg viewBox="0 0 16 16" width="11.5" height="11.5" style="left:43.95px;top:259.81px"><circle cx="8" cy="8" r="6.800" fill="#3f6fa8" stroke="#1f3f66" stroke-width=".8"/><path d="M8 1.200v13.600M1.200 8h13.600M3 4c3 1.500 7 1.500 10 0M3 12c3-1.500 7-1.500 10 0" fill="none" stroke="#e8eef6" stroke-width=".8"/><ellipse cx="8" cy="8" rx="3.200" ry="6.800" fill="none" stroke="#e8eef6" stroke-width=".8"/><rect x="3" y="6" width="10" height="3.500" fill="#dfe6ef" opacity=".85"/></svg><span class="t" style="left:58.75px;top:259.76px;letter-spacing:-0.900px;color:#1c1c1c;">WCS</span><svg viewBox="0 0 4 6" width="3.200" height="5" style="left:35.00px;top:275.32px"><path d="M0 0l4 3-4 3z" fill="#5a5a5a"/></svg><svg viewBox="0 0 16 16" width="11.5" height="11.5" style="left:43.95px;top:272.07px"><circle cx="8" cy="8" r="6.800" fill="#eaf1fa" stroke="#4a7fc0" stroke-width=".8"/><path d="M8 1.200v13.600M1.200 8h13.600M3 4c3 1.500 7 1.500 10 0M3 12c3-1.500 7-1.500 10 0" fill="none" stroke="#6a9ad0" stroke-width=".8"/><ellipse cx="8" cy="8" rx="3.200" ry="6.800" fill="none" stroke="#6a9ad0" stroke-width=".8"/><path d="M4.500 4l3 7 3.500-7" fill="none" stroke="#333" stroke-width="1"/></svg><span class="t" style="left:58.75px;top:272.02px;letter-spacing:-0.473px;color:#1c1c1c;">WFS / OGC API - Features</span><svg viewBox="0 0 4 6" width="3.200" height="5" style="left:35.00px;top:287.58px"><path d="M0 0l4 3-4 3z" fill="#5a5a5a"/></svg><svg viewBox="0 0 16 16" width="11.5" height="11.5" style="left:43.95px;top:284.33px"><circle cx="8" cy="8" r="6.800" fill="#f4f8fc" stroke="#5a9ad8" stroke-width=".8"/><path d="M8 1.200v13.600M1.200 8h13.600M3 4c3 1.500 7 1.500 10 0M3 12c3-1.500 7-1.500 10 0" fill="none" stroke="#7aaee0" stroke-width=".8"/><ellipse cx="8" cy="8" rx="3.200" ry="6.800" fill="none" stroke="#7aaee0" stroke-width=".8"/></svg><span class="t" style="left:58.75px;top:284.28px;letter-spacing:-0.900px;color:#1c1c1c;">OWS</span><svg viewBox="0 0 4 6" width="3.200" height="5" style="left:35.00px;top:299.83px"><path d="M0 0l4 3-4 3z" fill="#5a5a5a"/></svg><svg viewBox="0 0 16 16" width="11.5" height="11.5" style="left:43.95px;top:296.58px"><circle cx="8" cy="8" r="6.800" fill="#4a86c8" stroke="#2f5f9e" stroke-width=".8"/><path d="M8 1.200v13.600M1.200 8h13.600M3 4c3 1.500 7 1.500 10 0M3 12c3-1.500 7-1.500 10 0" fill="none" stroke="#eaf1fa" stroke-width=".8"/><ellipse cx="8" cy="8" rx="3.200" ry="6.800" fill="none" stroke="#eaf1fa" stroke-width=".8"/><path d="M3 6c2-3 6-3 6 0s-3 2-2 5-5-1-4-5z" fill="#cfe0f3" opacity=".8"/></svg><span class="t" style="left:58.75px;top:296.53px;letter-spacing:-0.455px;color:#1c1c1c;">ArcGIS Map Service</span><svg viewBox="0 0 4 6" width="3.200" height="5" style="left:35.00px;top:312.09px"><path d="M0 0l4 3-4 3z" fill="#5a5a5a"/></svg><svg viewBox="0 0 16 16" width="11.5" height="11.5" style="left:43.95px;top:308.84px"><circle cx="8" cy="8" r="6.800" fill="#5a8fc8" stroke="#2f5f9e" stroke-width=".8"/><path d="M8 1.200v13.600M1.200 8h13.600M3 4c3 1.500 7 1.500 10 0M3 12c3-1.500 7-1.500 10 0" fill="none" stroke="#eaf1fa" stroke-width=".8"/><ellipse cx="8" cy="8" rx="3.200" ry="6.800" fill="none" stroke="#eaf1fa" stroke-width=".8"/><path d="M5 4.500l3 6.500 3.500-6.500" fill="none" stroke="#f7f7f7" stroke-width="1.100"/></svg><span class="t" style="left:58.75px;top:308.79px;letter-spacing:-0.450px;color:#1c1c1c;">ArcGIS Feature Service</span><svg viewBox="0 0 16 16" width="11.5" height="11.5" style="left:43.95px;top:321.09px"><g stroke="#3f79c2" stroke-width="1.700" stroke-linecap="round"><path d="M8 1.500v13M2.300 4.700l11.400 6.600M13.700 4.700L2.300 11.300"/></g><circle cx="8" cy="8" r="2" fill="#3f79c2"/></svg><span class="t" style="left:58.75px;top:321.04px;letter-spacing:-0.525px;color:#1c1c1c;">GeoNode</span></div></div>
<div class="a" style="left:190px;top:100px;width:9.500px;height:228.500px;background:#f0f0f0;border-left:1px solid #e1e1e1;box-sizing:border-box"></div>
<div class="a" style="left:190.500px;top:110.500px;width:8.500px;height:198.500px;background:linear-gradient(90deg,#fafafa,#f1f1f1);border:1px solid #d9d9d9;box-sizing:border-box"></div>
<div class="a" style="left:190.500px;top:309px;width:8.500px;height:10.500px;background:#d9d9d9"></div>
<div class="a" style="left:190.500px;top:100.500px;width:8.500px;height:9.500px;background:#f6f6f6;border:1px solid #dedede;box-sizing:border-box"></div>
<div class="a" style="left:190.500px;top:319.500px;width:8.500px;height:9px;background:#f6f6f6;border:1px solid #dedede;box-sizing:border-box"></div>
<svg viewBox="0 0 6 4" width="5" height="3.200" style="left:192.300px;top:103.500px"><path d="M0 4h6L3 0z" fill="#4a4a4a"/></svg>
<svg viewBox="0 0 6 4" width="5" height="3.200" style="left:192.300px;top:322.700px"><path d="M0 0h6L3 4z" fill="#4a4a4a"/></svg>
<div class="a" style="left:110px;top:331px;width:9px;height:1px;background:repeating-linear-gradient(90deg,#c4c4c4 0 1px,#f0f0f0 1px 2px)"></div>
<span class="t" style="left:31.25px;top:334.40px;letter-spacing:-0.703px;color:#1c1c1c;">Layer</span>
<svg viewBox="0 0 14 6.500" width="14" height="6.500" style="left:185px;top:336.15px"><rect x="0" y="0" width="6" height="6.300" rx=".8" fill="#8e8e8e"/><path d="M1.300 4.900l3.300-3.400" stroke="#f4f4f4" stroke-width="1"/><rect x="3.600" y=".9" width="1.500" height="1.500" fill="#f4f4f4"/><rect x=".9" y="3.900" width="1.500" height="1.500" fill="#f4f4f4"/><rect x="7.300" y="0" width="6.400" height="6.300" rx="1.800" fill="#8e8e8e"/><path d="M8.600 1.100c.9 1.400.9 2.800 0 4.100M12.400 1.100c-.9 1.400-.9 2.800 0 4.100" fill="none" stroke="#f0f0f0" stroke-width=".9"/><path d="M9.500 1.700l2 2.900M11.500 1.700l-2 2.900" stroke="#3c3c3c" stroke-width=".9"/></svg>
<svg viewBox="0 0 16 16" width="10.5" height="10.5" style="left:32.25px;top:347.95px"><path d="M1 10l6-2 3 3-7 3z" fill="#d9503a"/><path d="M2 8l6-1.500 2 2.500-6 2z" fill="#f0c53a"/><path d="M8 8l5.500-6.500 1.500 1.300L9.500 9.500z" fill="#c79a5a" stroke="#7a5a2a" stroke-width=".4"/></svg>
<svg viewBox="0 0 16 16" width="10.5" height="10.5" style="left:45.75px;top:347.95px"><path d="M2 4h4l1 1.500h5V13H2z" fill="#b9b9b9" stroke="#777" stroke-width=".6"/><path d="M5 3l2-2 2 2v4H5z" fill="#e9e9e9" stroke="#888" stroke-width=".5"/><rect x="9.500" y="9.500" width="5.500" height="5.500" fill="#58a058"/><path d="M10.700 12.200h3M12.200 10.700v3" stroke="#fff" stroke-width=".8"/></svg>
<svg viewBox="0 0 16 16" width="10.5" height="10.5" style="left:59.45px;top:347.95px"><path d="M1 7c3-4 9-4 12 0-3 4-9 4-12 0z" fill="#e4e4e4" stroke="#555" stroke-width=".8"/><circle cx="7" cy="7" r="2.200" fill="#2f5f9e"/><path d="M9.500 11.500h5l-2.500 3z" fill="#333"/></svg>
<svg viewBox="0 0 16 16" width="10.5" height="10.5" style="left:72.55px;top:347.95px"><path d="M1.500 2h13L9.500 8v6.500l-3-1.500V8z" fill="#4a8fd0" stroke="#2f6fb0" stroke-width=".6"/><path d="M1.500 2h13v1.800h-13z" fill="#e9c13a"/></svg>
<svg viewBox="0 0 16 16" width="10.5" height="10.5" style="left:86.25px;top:347.95px"><path d="M2 3c2-2 4 1 2 2s0 3 2 2M7 8c2-2 4 1 2 2s0 3 2 2" fill="none" stroke="#c9c9c9" stroke-width="1"/></svg>
<svg viewBox="0 0 16 16" width="10.5" height="10.5" style="left:107.25px;top:347.95px"><rect x="2.500" y="2.500" width="7" height="9.500" fill="#f7f7f7" stroke="#8a8a8a" stroke-width=".8"/><rect x="3.300" y="4.500" width="2.200" height="5.500" fill="#e9c13a"/><path d="M10 2v7.500M6.800 7.700L10 12.200l3.200-4.500z" fill="#2f6fc0" stroke="#2f6fc0" stroke-width="1.300"/></svg>
<svg viewBox="0 0 16 16" width="10.5" height="10.5" style="left:120.75px;top:347.95px"><rect x="2.500" y="4" width="7" height="9.500" fill="#f7f7f7" stroke="#8a8a8a" stroke-width=".8"/><rect x="3.300" y="6" width="2.200" height="5.500" fill="#e9c13a"/><path d="M10 14V6.500M6.800 8.300L10 3.800l3.200 4.500z" fill="#2f6fc0" stroke="#2f6fc0" stroke-width="1.300"/></svg>
<svg viewBox="0 0 16 16" width="10.5" height="10.5" style="left:133.50px;top:347.95px"><rect x="1.500" y="2" width="10.500" height="10" fill="#f6f6f6" stroke="#8a8a8a" stroke-width=".9"/><rect x="9" y="9.500" width="5.800" height="5.800" rx="1.200" fill="#d9403a"/><path d="M10.300 12.400h3.200" stroke="#fff" stroke-width="1"/></svg>
<svg viewBox="0 0 6 4" width="5" height="3" style="left:98.50px;top:352.00px"><path d="M0 0h6L3 4z" fill="#a5a5a5"/></svg>
<div class="a" style="left:30px;top:361.500px;width:170px;height:196.500px;background:#fff;border:1px solid #d6d6d6;box-sizing:border-box"></div>
<div class="a" style="left:30.500px;top:362px;width:169px;height:13px;background:#3399ff"></div>
<div class="a" style="left:45.500px;top:364.300px;width:8.500px;height:8.500px;background:#fff;border:1px solid #cfe4fb;box-sizing:border-box"></div>
<svg viewBox="0 0 10 10" width="7" height="7" style="left:46.300px;top:365px"><path d="M1.300 4.800l2.700 3.400 4.700-7.400" fill="none" stroke="#000" stroke-width="1.800"/></svg>
<svg viewBox="0 0 16 16" width="10.5" height="10.5" style="left:57.25px;top:363.25px"><rect x="1.500" y="1.500" width="13" height="13" fill="#8db4e6"/><path d="M1.500 5.800h13M1.500 10.200h13M5.800 1.500v13M10.200 1.500v13" stroke="#2f5f9e" stroke-width="1.100"/><rect x="1.500" y="1.500" width="13" height="13" fill="none" stroke="#2f5f9e" stroke-width="1.100"/></svg>
<span class="t" style="left:71.25px;top:362.70px;letter-spacing:-0.389px;color:#fff;text-decoration:underline;text-decoration-thickness:.7px;text-underline-offset:1px;">Qwant VT</span><svg viewBox="0 0 1024 576" width="1024" height="576" style="left:0;top:0">
<defs><clipPath id="mc"><rect x="355.2" y="71" width="516.7" height="486.5"/></clipPath></defs>
<g clip-path="url(#mc)"><rect x="355.2" y="71" width="516.7" height="486.5" fill="#c6d8c6"/>
<path id="ld" d="M354.5 164.1L358.9 166.2L357.3 167.5L354.5 168.1ZM354.5 175.9L362.3 182.8L362.6 185.0L363.6 183.4L367.0 183.4L369.8 186.9L366.1 188.8L365.1 192.8L360.8 190.0L359.5 188.4L356.4 186.9L354.5 189.4ZM382.6 200.0L382.6 191.2L379.5 192.5L375.8 191.9L372.0 188.1L377.6 184.1L378.9 186.2L381.4 185.9L374.2 177.5L375.8 175.9L378.9 174.7L380.1 170.9L384.5 168.1L388.9 165.1L391.4 168.1L394.5 168.8L398.2 170.0L405.8 171.6L410.8 173.4L416.0 175.3L417.0 175.6L417.0 200.0ZM415.8 206.0L415.8 175.0L417.0 175.8L422.0 172.9L425.8 170.4L428.2 171.6L430.1 169.5L433.2 172.9L435.1 171.0L438.2 173.2L445.1 171.6L447.0 173.5L448.2 176.0L447.0 179.1L452.0 181.0L457.6 180.6L458.5 178.5L463.2 176.6L468.2 176.0L471.4 179.1L475.1 181.0L475.8 177.2L477.6 176.0L477.0 173.5L475.8 168.5L476.4 164.8L478.5 163.5L480.8 168.5L482.2 172.9L484.8 176.0L487.9 178.5L489.5 182.2L490.8 176.0L491.6 173.5L489.5 171.6L486.0 170.4L485.5 167.2L488.2 167.2L492.0 168.5L495.8 171.6L497.0 176.0L495.8 181.0L497.6 184.8L502.0 188.5L503.2 206.0ZM433.5 163.5L434.8 152.9L439.1 151.0L445.4 152.9L447.2 156.0L442.9 159.8L441.0 164.1L437.2 167.2ZM437.9 139.1L442.9 132.2L446.6 131.6L446.0 136.6L441.0 142.2L438.5 141.6ZM445.4 144.8L447.9 140.4L452.2 141.0L455.4 144.8L456.6 137.9L459.1 142.2L461.6 142.2L461.0 147.2L456.0 148.5L452.2 150.4L449.8 147.9L446.0 146.6ZM451.0 129.8L454.1 128.5L455.4 131.0L452.9 132.2ZM442.9 164.1L446.0 159.1L449.1 157.2L450.4 159.8L454.8 158.5L456.6 161.0L458.5 163.5L459.8 157.9L461.6 161.0L464.1 167.2L466.0 169.8L468.5 173.5L465.4 175.4L461.0 176.0L457.2 177.2L452.2 176.6L449.8 174.8L447.2 172.9L445.4 171.0L451.0 170.4L450.4 169.1L445.4 168.5L446.6 166.0L443.5 166.0ZM461.0 155.4L462.9 154.8L463.5 157.0L461.6 157.9ZM467.2 156.0L471.0 154.1L474.1 155.4L472.9 158.5L474.1 163.5L471.0 165.4L468.5 162.2L466.6 159.1ZM476.6 154.1L480.4 152.9L482.9 154.1L481.0 157.9L478.5 162.2L476.6 159.8L476.0 156.6ZM471.0 174.1L473.5 171.6L475.4 174.1L474.1 176.0L471.6 175.8ZM466.6 139.8L469.8 137.9L472.9 138.5L472.9 142.2L471.6 146.0L469.1 146.6L467.2 143.5ZM475.4 144.8L477.9 144.8L478.5 147.9L476.0 148.8ZM474.8 136.0L477.2 135.4L481.0 138.5L484.1 142.2L491.0 144.8L497.2 144.1L498.5 146.6L497.2 149.1L486.0 149.8L482.2 147.9L479.8 143.5L476.0 139.8ZM463.5 126.0L467.2 126.0L471.0 129.1L473.5 126.0L476.0 126.0L474.8 129.8L471.0 130.4L467.2 128.5ZM485.4 135.4L487.9 130.4L491.0 131.0L489.8 127.2L496.0 126.0L503.5 126.0L502.2 130.4L499.1 133.5L499.8 136.6L496.6 139.1L489.8 138.5L486.6 137.2ZM484.8 159.8L486.0 156.0L489.8 154.8L491.0 159.1L494.1 155.4L497.2 158.5L497.9 161.6L501.0 155.0L504.1 158.8L502.2 159.8L508.5 164.8L513.5 168.5L516.6 173.5L515.4 176.0L519.8 179.8L523.5 183.5L524.1 186.6L522.2 189.1L518.5 185.4L516.0 187.2L519.8 192.2L521.0 206.0L512.2 206.0L509.8 193.5L509.1 184.8L507.2 178.5L502.2 174.8L497.2 171.6L491.0 172.2L486.6 170.0L485.4 166.0L486.6 163.5ZM495.5 188.5L499.9 189.1L501.8 191.6L505.5 191.0L509.2 194.8L509.8 206.0L494.8 206.0ZM503.5 179.1L505.0 178.8L505.5 181.0L504.2 182.2L503.2 181.0ZM489.8 187.2L492.9 188.5L496.0 191.0L497.2 196.0L491.0 196.0L488.5 191.0ZM482.2 97.4L491.0 88.6L494.1 91.1L498.5 83.6L508.5 81.1L519.8 84.2L524.5 89.2L521.6 96.1L516.6 99.9L519.8 101.1L514.8 106.8L511.0 115.5L504.1 119.2L505.4 124.2L501.0 131.8L498.0 133.5L499.2 137.2L495.5 139.1L488.0 138.5L485.5 136.0L487.9 133.0L487.2 129.9L491.0 131.1L489.1 126.8L491.0 121.8L487.9 113.0L494.8 111.8L495.4 109.9L487.9 109.2L483.5 101.8ZM478.5 102.4L481.0 103.6L484.1 109.2L487.9 114.9L489.8 120.5L486.6 125.5L482.2 127.0L478.5 123.0L479.1 118.6L476.0 116.1L474.8 111.8L476.6 104.9ZM461.6 119.9L464.1 119.2L468.5 123.0L470.8 128.6L468.5 129.0L464.1 126.1L462.2 123.0ZM472.2 123.0L474.1 122.4L476.0 126.8L475.4 129.5L473.5 129.2L472.0 125.8ZM452.2 123.6L454.1 123.0L455.0 125.5L452.9 126.5ZM451.0 129.2L454.8 128.6L455.4 131.1L452.2 132.0ZM439.1 138.6L441.6 133.0L446.0 131.5L446.6 135.5L444.1 139.9ZM475.4 135.5L478.5 135.5L482.2 138.6L482.2 140.5L474.8 140.5ZM523.8 97.4L526.9 94.6L536.2 93.0L537.9 95.8L541.2 91.1L547.2 96.5L546.9 90.5L551.2 81.8L556.2 80.5L558.8 77.4L567.5 76.5L575.0 78.6L583.1 86.8L581.9 89.9L577.5 91.8L570.0 93.0L568.1 94.2L575.0 94.9L580.0 94.2L581.2 99.9L587.5 97.4L592.5 96.5L596.0 99.2L595.0 103.6L590.0 108.0L587.5 112.4L586.5 116.1L586.0 123.0L586.5 130.5L586.8 135.5L586.1 138.5L585.8 146.0L586.0 149.8L582.2 156.0L581.6 162.2L582.2 168.5L578.5 172.2L572.2 177.2L567.2 178.5L563.5 183.5L558.5 186.0L555.4 191.0L554.5 201.0L539.9 201.0L539.9 195.4L537.1 184.8L537.8 178.5L535.2 173.5L533.6 167.2L534.0 162.2L536.1 159.8L533.0 151.0L529.2 142.2L523.0 139.1L515.5 139.8L511.8 135.4L518.0 132.2L510.5 128.5L509.2 126.0L509.2 126.0L518.8 119.9L520.0 117.4L516.9 111.1L523.1 103.6ZM576.8 132.9L579.2 133.5L579.9 137.2L577.4 139.8L576.1 137.2ZM578.6 187.2L581.1 185.4L584.9 186.0L588.0 184.8L592.4 185.4L593.0 189.1L591.1 193.5L585.5 194.8L580.5 192.9L581.8 189.8ZM631.9 126.0L633.1 118.5L635.0 114.8L640.0 114.1L641.9 117.2L641.2 126.0L638.8 132.2L638.1 136.6L635.6 135.4L633.8 131.0ZM642.5 116.0L646.2 113.5L651.2 114.1L653.8 117.2L652.5 119.8L648.1 121.0L644.4 119.8ZM643.8 127.2L647.5 126.6L648.8 130.4L645.0 132.2L643.1 130.4ZM677.0 106.0L680.1 104.1L683.2 106.0L681.4 108.5L678.2 108.5ZM626.9 206.0L626.9 195.4L630.6 188.5L635.0 179.8L641.2 173.5L648.1 167.9L653.8 166.2L658.1 169.1L658.8 172.9L662.5 174.1L669.4 178.5L672.5 181.6L671.9 186.0L667.5 187.2L661.9 184.8L663.1 188.5L663.8 192.2L666.9 194.1L667.5 191.0L670.6 189.1L672.5 186.0L676.9 184.8L676.2 179.8L678.1 177.2L680.0 179.8L680.0 183.5L683.8 179.8L690.0 176.6L691.9 178.5L697.5 176.0L700.0 172.9L703.8 174.1L708.0 176.0L708.0 206.0ZM688.0 162.2L690.1 154.8L693.9 147.2L699.5 141.6L707.0 137.2L710.8 136.4L712.8 138.2L710.8 141.0L704.5 144.1L699.5 148.5L696.4 153.5L693.2 161.0L695.5 167.9L692.0 167.9L689.5 165.8ZM692.0 206.0L692.0 178.5L697.0 177.2L700.1 173.5L702.0 174.8L708.2 174.1L712.0 178.5L712.6 176.0L710.1 169.8L711.4 163.5L714.5 158.5L717.6 159.1L718.9 162.2L717.6 167.2L720.1 176.0L718.9 181.0L716.4 185.4L717.6 186.0L720.8 179.8L721.4 176.0L720.1 168.5L719.5 163.5L721.4 159.1L722.6 166.0L725.8 162.2L729.5 162.9L729.5 155.4L737.6 153.5L738.2 149.1L745.8 144.1L752.0 141.6L758.2 137.9L760.1 133.5L763.9 131.6L767.0 137.2L773.2 137.2L777.0 141.0L777.0 145.4L771.4 151.6L775.8 154.1L777.0 156.0L784.5 155.4L785.1 157.2L790.8 157.2L791.4 155.4L797.0 156.0L799.5 161.0L800.1 165.4L802.6 167.2L803.2 164.1L809.5 163.5L813.2 164.1L815.1 159.8L820.0 158.5L820.0 206.0ZM818.5 206.0L818.5 159.1L828.5 162.2L831.0 165.4L833.5 167.2L842.2 167.9L844.1 172.9L851.0 173.5L856.0 174.1L857.2 176.0L858.5 172.2L866.0 172.9L871.9 175.4L874.8 176.0L874.8 206.0ZM756.4 127.9L757.6 124.8L760.1 121.6L763.9 120.4L767.0 122.9L765.1 126.0L763.2 127.9L758.2 129.1ZM745.1 104.1L748.2 102.9L752.0 106.0L755.1 111.6L757.0 117.2L754.5 120.4L751.4 118.5L748.9 113.5L745.8 108.5ZM810.4 143.5L812.9 141.0L817.9 141.6L821.0 144.8L820.4 147.9L813.5 149.1L811.0 146.6ZM823.5 144.8L829.8 146.6L828.5 149.1L824.8 147.9ZM814.8 155.4L817.2 153.5L819.8 156.0L817.9 157.2L815.4 156.6ZM774.8 141.0L777.2 141.6L777.9 144.8L776.0 146.2L774.5 144.8ZM870.4 166.0L872.9 165.4L872.9 168.5L870.4 167.9Z" fill="none" stroke="#74a077" stroke-width="1.500" stroke-linejoin="round"/>
<path d="M354.5 164.1L358.9 166.2L357.3 167.5L354.5 168.1ZM354.5 175.9L362.3 182.8L362.6 185.0L363.6 183.4L367.0 183.4L369.8 186.9L366.1 188.8L365.1 192.8L360.8 190.0L359.5 188.4L356.4 186.9L354.5 189.4ZM382.6 200.0L382.6 191.2L379.5 192.5L375.8 191.9L372.0 188.1L377.6 184.1L378.9 186.2L381.4 185.9L374.2 177.5L375.8 175.9L378.9 174.7L380.1 170.9L384.5 168.1L388.9 165.1L391.4 168.1L394.5 168.8L398.2 170.0L405.8 171.6L410.8 173.4L416.0 175.3L417.0 175.6L417.0 200.0ZM415.8 206.0L415.8 175.0L417.0 175.8L422.0 172.9L425.8 170.4L428.2 171.6L430.1 169.5L433.2 172.9L435.1 171.0L438.2 173.2L445.1 171.6L447.0 173.5L448.2 176.0L447.0 179.1L452.0 181.0L457.6 180.6L458.5 178.5L463.2 176.6L468.2 176.0L471.4 179.1L475.1 181.0L475.8 177.2L477.6 176.0L477.0 173.5L475.8 168.5L476.4 164.8L478.5 163.5L480.8 168.5L482.2 172.9L484.8 176.0L487.9 178.5L489.5 182.2L490.8 176.0L491.6 173.5L489.5 171.6L486.0 170.4L485.5 167.2L488.2 167.2L492.0 168.5L495.8 171.6L497.0 176.0L495.8 181.0L497.6 184.8L502.0 188.5L503.2 206.0ZM433.5 163.5L434.8 152.9L439.1 151.0L445.4 152.9L447.2 156.0L442.9 159.8L441.0 164.1L437.2 167.2ZM437.9 139.1L442.9 132.2L446.6 131.6L446.0 136.6L441.0 142.2L438.5 141.6ZM445.4 144.8L447.9 140.4L452.2 141.0L455.4 144.8L456.6 137.9L459.1 142.2L461.6 142.2L461.0 147.2L456.0 148.5L452.2 150.4L449.8 147.9L446.0 146.6ZM451.0 129.8L454.1 128.5L455.4 131.0L452.9 132.2ZM442.9 164.1L446.0 159.1L449.1 157.2L450.4 159.8L454.8 158.5L456.6 161.0L458.5 163.5L459.8 157.9L461.6 161.0L464.1 167.2L466.0 169.8L468.5 173.5L465.4 175.4L461.0 176.0L457.2 177.2L452.2 176.6L449.8 174.8L447.2 172.9L445.4 171.0L451.0 170.4L450.4 169.1L445.4 168.5L446.6 166.0L443.5 166.0ZM461.0 155.4L462.9 154.8L463.5 157.0L461.6 157.9ZM467.2 156.0L471.0 154.1L474.1 155.4L472.9 158.5L474.1 163.5L471.0 165.4L468.5 162.2L466.6 159.1ZM476.6 154.1L480.4 152.9L482.9 154.1L481.0 157.9L478.5 162.2L476.6 159.8L476.0 156.6ZM471.0 174.1L473.5 171.6L475.4 174.1L474.1 176.0L471.6 175.8ZM466.6 139.8L469.8 137.9L472.9 138.5L472.9 142.2L471.6 146.0L469.1 146.6L467.2 143.5ZM475.4 144.8L477.9 144.8L478.5 147.9L476.0 148.8ZM474.8 136.0L477.2 135.4L481.0 138.5L484.1 142.2L491.0 144.8L497.2 144.1L498.5 146.6L497.2 149.1L486.0 149.8L482.2 147.9L479.8 143.5L476.0 139.8ZM463.5 126.0L467.2 126.0L471.0 129.1L473.5 126.0L476.0 126.0L474.8 129.8L471.0 130.4L467.2 128.5ZM485.4 135.4L487.9 130.4L491.0 131.0L489.8 127.2L496.0 126.0L503.5 126.0L502.2 130.4L499.1 133.5L499.8 136.6L496.6 139.1L489.8 138.5L486.6 137.2ZM484.8 159.8L486.0 156.0L489.8 154.8L491.0 159.1L494.1 155.4L497.2 158.5L497.9 161.6L501.0 155.0L504.1 158.8L502.2 159.8L508.5 164.8L513.5 168.5L516.6 173.5L515.4 176.0L519.8 179.8L523.5 183.5L524.1 186.6L522.2 189.1L518.5 185.4L516.0 187.2L519.8 192.2L521.0 206.0L512.2 206.0L509.8 193.5L509.1 184.8L507.2 178.5L502.2 174.8L497.2 171.6L491.0 172.2L486.6 170.0L485.4 166.0L486.6 163.5ZM495.5 188.5L499.9 189.1L501.8 191.6L505.5 191.0L509.2 194.8L509.8 206.0L494.8 206.0ZM503.5 179.1L505.0 178.8L505.5 181.0L504.2 182.2L503.2 181.0ZM489.8 187.2L492.9 188.5L496.0 191.0L497.2 196.0L491.0 196.0L488.5 191.0ZM482.2 97.4L491.0 88.6L494.1 91.1L498.5 83.6L508.5 81.1L519.8 84.2L524.5 89.2L521.6 96.1L516.6 99.9L519.8 101.1L514.8 106.8L511.0 115.5L504.1 119.2L505.4 124.2L501.0 131.8L498.0 133.5L499.2 137.2L495.5 139.1L488.0 138.5L485.5 136.0L487.9 133.0L487.2 129.9L491.0 131.1L489.1 126.8L491.0 121.8L487.9 113.0L494.8 111.8L495.4 109.9L487.9 109.2L483.5 101.8ZM478.5 102.4L481.0 103.6L484.1 109.2L487.9 114.9L489.8 120.5L486.6 125.5L482.2 127.0L478.5 123.0L479.1 118.6L476.0 116.1L474.8 111.8L476.6 104.9ZM461.6 119.9L464.1 119.2L468.5 123.0L470.8 128.6L468.5 129.0L464.1 126.1L462.2 123.0ZM472.2 123.0L474.1 122.4L476.0 126.8L475.4 129.5L473.5 129.2L472.0 125.8ZM452.2 123.6L454.1 123.0L455.0 125.5L452.9 126.5ZM451.0 129.2L454.8 128.6L455.4 131.1L452.2 132.0ZM439.1 138.6L441.6 133.0L446.0 131.5L446.6 135.5L444.1 139.9ZM475.4 135.5L478.5 135.5L482.2 138.6L482.2 140.5L474.8 140.5ZM523.8 97.4L526.9 94.6L536.2 93.0L537.9 95.8L541.2 91.1L547.2 96.5L546.9 90.5L551.2 81.8L556.2 80.5L558.8 77.4L567.5 76.5L575.0 78.6L583.1 86.8L581.9 89.9L577.5 91.8L570.0 93.0L568.1 94.2L575.0 94.9L580.0 94.2L581.2 99.9L587.5 97.4L592.5 96.5L596.0 99.2L595.0 103.6L590.0 108.0L587.5 112.4L586.5 116.1L586.0 123.0L586.5 130.5L586.8 135.5L586.1 138.5L585.8 146.0L586.0 149.8L582.2 156.0L581.6 162.2L582.2 168.5L578.5 172.2L572.2 177.2L567.2 178.5L563.5 183.5L558.5 186.0L555.4 191.0L554.5 201.0L539.9 201.0L539.9 195.4L537.1 184.8L537.8 178.5L535.2 173.5L533.6 167.2L534.0 162.2L536.1 159.8L533.0 151.0L529.2 142.2L523.0 139.1L515.5 139.8L511.8 135.4L518.0 132.2L510.5 128.5L509.2 126.0L509.2 126.0L518.8 119.9L520.0 117.4L516.9 111.1L523.1 103.6ZM576.8 132.9L579.2 133.5L579.9 137.2L577.4 139.8L576.1 137.2ZM578.6 187.2L581.1 185.4L584.9 186.0L588.0 184.8L592.4 185.4L593.0 189.1L591.1 193.5L585.5 194.8L580.5 192.9L581.8 189.8ZM631.9 126.0L633.1 118.5L635.0 114.8L640.0 114.1L641.9 117.2L641.2 126.0L638.8 132.2L638.1 136.6L635.6 135.4L633.8 131.0ZM642.5 116.0L646.2 113.5L651.2 114.1L653.8 117.2L652.5 119.8L648.1 121.0L644.4 119.8ZM643.8 127.2L647.5 126.6L648.8 130.4L645.0 132.2L643.1 130.4ZM677.0 106.0L680.1 104.1L683.2 106.0L681.4 108.5L678.2 108.5ZM626.9 206.0L626.9 195.4L630.6 188.5L635.0 179.8L641.2 173.5L648.1 167.9L653.8 166.2L658.1 169.1L658.8 172.9L662.5 174.1L669.4 178.5L672.5 181.6L671.9 186.0L667.5 187.2L661.9 184.8L663.1 188.5L663.8 192.2L666.9 194.1L667.5 191.0L670.6 189.1L672.5 186.0L676.9 184.8L676.2 179.8L678.1 177.2L680.0 179.8L680.0 183.5L683.8 179.8L690.0 176.6L691.9 178.5L697.5 176.0L700.0 172.9L703.8 174.1L708.0 176.0L708.0 206.0ZM688.0 162.2L690.1 154.8L693.9 147.2L699.5 141.6L707.0 137.2L710.8 136.4L712.8 138.2L710.8 141.0L704.5 144.1L699.5 148.5L696.4 153.5L693.2 161.0L695.5 167.9L692.0 167.9L689.5 165.8ZM692.0 206.0L692.0 178.5L697.0 177.2L700.1 173.5L702.0 174.8L708.2 174.1L712.0 178.5L712.6 176.0L710.1 169.8L711.4 163.5L714.5 158.5L717.6 159.1L718.9 162.2L717.6 167.2L720.1 176.0L718.9 181.0L716.4 185.4L717.6 186.0L720.8 179.8L721.4 176.0L720.1 168.5L719.5 163.5L721.4 159.1L722.6 166.0L725.8 162.2L729.5 162.9L729.5 155.4L737.6 153.5L738.2 149.1L745.8 144.1L752.0 141.6L758.2 137.9L760.1 133.5L763.9 131.6L767.0 137.2L773.2 137.2L777.0 141.0L777.0 145.4L771.4 151.6L775.8 154.1L777.0 156.0L784.5 155.4L785.1 157.2L790.8 157.2L791.4 155.4L797.0 156.0L799.5 161.0L800.1 165.4L802.6 167.2L803.2 164.1L809.5 163.5L813.2 164.1L815.1 159.8L820.0 158.5L820.0 206.0ZM818.5 206.0L818.5 159.1L828.5 162.2L831.0 165.4L833.5 167.2L842.2 167.9L844.1 172.9L851.0 173.5L856.0 174.1L857.2 176.0L858.5 172.2L866.0 172.9L871.9 175.4L874.8 176.0L874.8 206.0ZM756.4 127.9L757.6 124.8L760.1 121.6L763.9 120.4L767.0 122.9L765.1 126.0L763.2 127.9L758.2 129.1ZM745.1 104.1L748.2 102.9L752.0 106.0L755.1 111.6L757.0 117.2L754.5 120.4L751.4 118.5L748.9 113.5L745.8 108.5ZM810.4 143.5L812.9 141.0L817.9 141.6L821.0 144.8L820.4 147.9L813.5 149.1L811.0 146.6ZM823.5 144.8L829.8 146.6L828.5 149.1L824.8 147.9ZM814.8 155.4L817.2 153.5L819.8 156.0L817.9 157.2L815.4 156.6ZM774.8 141.0L777.2 141.6L777.9 144.8L776.0 146.2L774.5 144.8ZM870.4 166.0L872.9 165.4L872.9 168.5L870.4 167.9Z" fill="#fff"/>
<path d="M434.5 186.0L439.5 184.1L442.6 182.9L444.5 184.8L442.0 186.0L443.2 188.5L439.5 189.8L438.2 187.9L435.1 187.9ZM524.4 102.6L531.2 101.8L540.0 100.5L541.2 102.4L541.9 98.0L544.4 101.1L550.0 99.9L551.2 96.8L552.5 89.9L554.4 89.2L555.0 93.0L560.0 96.1L561.2 98.6L565.0 97.4L570.0 101.1L573.8 103.0L576.2 111.1L581.2 114.2L585.5 116.8L584.0 123.0L582.2 128.0L583.5 133.0L581.9 138.0L582.4 138.5L581.1 144.8L582.4 147.2L580.5 151.6L574.5 153.1L575.1 159.8L572.0 164.8L572.6 170.4L575.8 171.2L570.8 175.6L567.0 177.8L563.2 183.0L558.2 185.5L555.1 190.5L554.2 201.0L542.8 201.0L542.8 195.4L541.8 188.5L539.5 178.2L541.1 173.5L539.9 166.0L536.1 159.8L533.0 151.0L529.2 142.2L523.0 139.1L515.5 139.8L516.8 136.0L518.0 132.2L510.5 128.5L509.2 126.0L509.2 126.0L511.2 124.9L518.8 120.5L520.0 117.6L528.8 111.1L524.4 105.5ZM555.0 86.8L560.6 80.5L561.9 81.1L561.2 86.8L557.5 90.5ZM587.5 104.2L590.6 99.9L594.4 99.9L593.8 104.2L590.0 106.5ZM568.1 93.6L575.0 94.5L579.4 93.8L575.0 93.0ZM645.0 187.9L648.5 187.6L649.5 189.8L646.5 194.5L642.1 194.5L643.8 190.4ZM868.5 191.0L872.9 190.0L872.9 195.4L870.0 194.5Z" fill="none" stroke="#74a077" stroke-width="1.400" stroke-linejoin="round"/>
<path d="M434.5 186.0L439.5 184.1L442.6 182.9L444.5 184.8L442.0 186.0L443.2 188.5L439.5 189.8L438.2 187.9L435.1 187.9ZM524.4 102.6L531.2 101.8L540.0 100.5L541.2 102.4L541.9 98.0L544.4 101.1L550.0 99.9L551.2 96.8L552.5 89.9L554.4 89.2L555.0 93.0L560.0 96.1L561.2 98.6L565.0 97.4L570.0 101.1L573.8 103.0L576.2 111.1L581.2 114.2L585.5 116.8L584.0 123.0L582.2 128.0L583.5 133.0L581.9 138.0L582.4 138.5L581.1 144.8L582.4 147.2L580.5 151.6L574.5 153.1L575.1 159.8L572.0 164.8L572.6 170.4L575.8 171.2L570.8 175.6L567.0 177.8L563.2 183.0L558.2 185.5L555.1 190.5L554.2 201.0L542.8 201.0L542.8 195.4L541.8 188.5L539.5 178.2L541.1 173.5L539.9 166.0L536.1 159.8L533.0 151.0L529.2 142.2L523.0 139.1L515.5 139.8L516.8 136.0L518.0 132.2L510.5 128.5L509.2 126.0L509.2 126.0L511.2 124.9L518.8 120.5L520.0 117.6L528.8 111.1L524.4 105.5ZM555.0 86.8L560.6 80.5L561.9 81.1L561.2 86.8L557.5 90.5ZM587.5 104.2L590.6 99.9L594.4 99.9L593.8 104.2L590.0 106.5ZM568.1 93.6L575.0 94.5L579.4 93.8L575.0 93.0ZM645.0 187.9L648.5 187.6L649.5 189.8L646.5 194.5L642.1 194.5L643.8 190.4ZM868.5 191.0L872.9 190.0L872.9 195.4L870.0 194.5Z" fill="#c6d8c6"/>
<g fill="none" stroke="#ecc873" stroke-width=".8">
<path d="M410.8 173.2L410.8 196.0"/>
<path d="M417.0 175.8L417.6 182.2L420.5 183.8L422.0 187.2L423.9 189.8L427.0 195.4"/>
<path d="M455.4 123.2L455.4 171.6L445.1 171.6L445.1 172.9L440.1 172.9L440.8 178.5L450.8 187.9L458.2 191.0L467.0 192.9L467.6 195.4"/>
<path d="M631.2 195.4L633.1 191.0L635.6 182.2L638.8 178.5L641.9 176.0L644.4 174.5L645.6 176.6L647.5 176.0L648.5 181.0L648.1 187.2"/>
<path d="M647.5 176.0L650.0 174.1L651.9 171.6L655.0 172.2L656.2 175.4L655.0 178.5L655.6 184.8L656.9 191.0L657.2 195.4"/>
<path d="M656.2 174.1L658.1 172.5"/>
</g>
<circle cx="369.3" cy="83.6" r="2.700" fill="#d0b5a5" stroke="#bd9c88" stroke-width=".7"/>
<circle cx="419.6" cy="171.3" r="2.700" fill="#d0b5a5" stroke="#bd9c88" stroke-width=".7"/>
<circle cx="517" cy="157.6" r="2.700" fill="#d0b5a5" stroke="#bd9c88" stroke-width=".7"/>
<circle cx="551.8" cy="131.6" r="2.700" fill="#d0b5a5" stroke="#bd9c88" stroke-width=".7"/>
<circle cx="587.7" cy="190.3" r="2.700" fill="#d0b5a5" stroke="#bd9c88" stroke-width=".7"/>
<circle cx="650" cy="194.6" r="2.700" fill="#d0b5a5" stroke="#bd9c88" stroke-width=".7"/>
<circle cx="753.9" cy="191.3" r="2.700" fill="#d0b5a5" stroke="#bd9c88" stroke-width=".7"/>
<path d="M402.6 518.8L399.5 524.4L397.0 526.2L395.1 523.1L392.6 524.4L388.9 524.4L389.5 526.9L393.9 533.1L394.5 537.5L392.6 547.5L392.6 552.5L395.8 555.0L397.6 557.5" fill="none" stroke="#74a077" stroke-width=".8"/>
<path d="M365.1 558.8L368.9 555.0L372.0 558.8" fill="none" stroke="#74a077" stroke-width=".8"/>
<path d="M509.5 517.7L515.0 523.2L520.5 524.6L521.8 521.8L527.3 531.4L528.7 541.0L530.0 546.4L532.8 542.3L539.6 534.1L549.2 528.7L551.9 532.8L558.8 525.9L569.7 517.7" fill="none" stroke="#74a077" stroke-width=".8"/>
<path d="M519.1 517.7L520.5 523.2L525.9 521.8L527.3 517.7" fill="none" stroke="#74a077" stroke-width=".8"/>
<path d="M535.5 517.7L536.9 521.8L545.1 521.0L547.8 517.7" fill="none" stroke="#74a077" stroke-width=".8"/>
<path d="M842.9 517.7L844.2 525.9L848.3 534.7L852.4 542.3L856.5 549.2L856.5 554.6L860.6 557.7" fill="none" stroke="#74a077" stroke-width=".8"/>
</g></svg><div class="a" style="left:325.3px;top:195.3px;width:579.2px;height:323.90000000000003px;background:#f0f0f0;border:1px solid #8a8a8a;border-bottom-color:#e4e4e4;box-sizing:border-box;box-shadow:0 0 2px rgba(0,0,0,.18)"></div>
<div class="a" style="left:326.3px;top:196.3px;width:577.2px;height:20.500px;background:#fff"></div>
<svg viewBox="0 0 16 16" width="10.5" height="10.5" style="left:331px;top:200.8px"><circle cx="7.300" cy="7.300" r="5.300" fill="none" stroke="#6aa832" stroke-width="3.200"/><path d="M8.500 8.500l6.500 6.500" stroke="#6aa832" stroke-width="3.400"/><path d="M7.200 7.200l4 .8 3.800 7-6-4.800z" fill="#f0c020"/><circle cx="7.800" cy="7.800" r="1.200" fill="#d9403a"/></svg>
<span class="t" style="left:344.00px;top:200.20px;letter-spacing:-0.467px;color:#1c1c1c;">Layer Properties - Qwant VT — Symbology</span>
<svg viewBox="0 0 8 8" width="7" height="7" style="left:889px;top:202.200px"><path d="M.500.500l7 7M7.500.500l-7 7" stroke="#222" stroke-width=".9"/></svg>
<div class="a" style="left:326.300px;top:216.800px;width:79.700px;height:14.400px;background:#fff;border:1px solid #c9c9c9;box-sizing:border-box"></div>
<svg viewBox="0 0 10 10" width="6" height="6" style="left:330.500px;top:221px"><circle cx="4" cy="4" r="2.800" fill="none" stroke="#9a9a9a" stroke-width="1.100"/><path d="M6 6l3 3" stroke="#9a9a9a" stroke-width="1.300"/></svg>
<div class="a" style="left:326.300px;top:231.200px;width:79.700px;height:287.600px;background:#5d5d5d"></div>
<div class="a" style="left:326.300px;top:255px;width:79.700px;height:20.300px;background:#f0f0f0"></div>
<svg viewBox="0 0 16 16" width="14.500" height="14.500" style="left:328.300px;top:238.300px"><circle cx="8" cy="8" r="7.200" fill="#5b93d6" stroke="#dfe9f5" stroke-width=".7"/><text x="5.800" y="12.300" font-size="11.500" font-weight="bold" font-style="italic" font-family="Liberation Serif, serif" fill="#fff">i</text></svg>
<span class="t" style="left:346.50px;top:239.80px;letter-spacing:-0.047px;color:#e8e8e8;">Information</span>
<svg viewBox="0 0 16 16" width="14" height="14" style="left:328.600px;top:258.600px"><path d="M1 11l6-3 4 3-7 3.500z" fill="#c9503a"/><path d="M1.500 9l6-2.500 3 2.500-6 3z" fill="#6a9a5a"/><path d="M2 7.500l5.500-2 3 2-6 2.500z" fill="#8a8a8a"/><path d="M7.500 8.500L13.500 1.500l1.500 1.200-5.500 7.300z" fill="#c79a5a" stroke="#7a5a2a" stroke-width=".4"/><path d="M6.500 11l1-2.500 2 1.500z" fill="#555"/></svg>
<span class="t" style="left:348.40px;top:260.20px;letter-spacing:-0.326px;color:#1c1c1c;">Symbology</span>
<svg viewBox="0 0 16 8" width="13.500" height="6.800" style="left:329px;top:282.300px"><path d="M.500 4l2-3.500h13v7h-13z" fill="#f2c83a" stroke="#c79a1e" stroke-width=".5"/><text x="3.500" y="6.200" font-size="5.600" font-weight="bold" font-family="Liberation Sans, sans-serif" fill="#5a4a10">abc</text></svg>
<span class="t" style="left:346.50px;top:280.20px;letter-spacing:-0.490px;color:#e8e8e8;">Labels</span>
<div class="a" style="left:408.500px;top:216.800px;width:494.500px;height:263.700px;background:#fff;border:1px solid #bcbcbc;box-sizing:border-box"></div>
<div class="a" style="left:409.500px;top:217.800px;width:492.500px;height:13.200px;background:linear-gradient(#fdfdfd,#f3f3f3);border-bottom:1px solid #d8d8d8;box-sizing:border-box"></div>
<div class="a" style="left:475.3px;top:217.800px;width:1px;height:13.200px;background:#dcdcdc"></div>
<div class="a" style="left:542.2px;top:217.800px;width:1px;height:13.200px;background:#dcdcdc"></div>
<div class="a" style="left:608.8px;top:217.800px;width:1px;height:13.200px;background:#dcdcdc"></div>
<div class="a" style="left:675.6px;top:217.800px;width:1px;height:13.200px;background:#dcdcdc"></div>
<span class="t" style="left:410.60px;top:219.00px;letter-spacing:-0.606px;color:#1c1c1c;">Label</span>
<span class="t" style="left:477.20px;top:219.00px;letter-spacing:-0.703px;color:#1c1c1c;">Layer</span>
<span class="t" style="left:543.75px;top:219.00px;letter-spacing:-0.174px;color:#1c1c1c;">Min. Zoom</span>
<span class="t" style="left:611.00px;top:219.00px;letter-spacing:-0.333px;color:#1c1c1c;">Max. Zoom</span>
<span class="t" style="left:677.20px;top:219.00px;letter-spacing:-0.094px;color:#1c1c1c;">Filter</span>
<div class="a" style="left:410.500px;top:233.20px;width:9px;height:9px;background:#fff;border:1px solid #dadada;box-sizing:border-box"></div>
<svg viewBox="0 0 10 10" width="7" height="7" style="left:411.700px;top:234.10px"><path d="M1.300 4.800l2.700 3.400 4.700-7.400" fill="none" stroke="#000" stroke-width="1.800"/></svg>
<span class="t" style="left:435.60px;top:231.80px;letter-spacing:-0.400px;color:#1c1c1c;">Polygons</span>
<span class="t" style="left:477.20px;top:231.80px;letter-spacing:-0.215px;color:#1c1c1c;">(all layers)</span>
<span class="t" style="left:677.20px;top:231.80px;letter-spacing:-0.002px;color:#1c1c1c;">(no filter)</span>
<div class="a" style="left:410.500px;top:245.40px;width:9px;height:9px;background:#fff;border:1px solid #dadada;box-sizing:border-box"></div>
<svg viewBox="0 0 10 10" width="7" height="7" style="left:411.700px;top:246.30px"><path d="M1.300 4.800l2.700 3.400 4.700-7.400" fill="none" stroke="#000" stroke-width="1.800"/></svg>
<span class="t" style="left:435.60px;top:244.00px;letter-spacing:-0.606px;color:#1c1c1c;">Lines</span>
<span class="t" style="left:477.20px;top:244.00px;letter-spacing:-0.215px;color:#1c1c1c;">(all layers)</span>
<span class="t" style="left:677.20px;top:244.00px;letter-spacing:-0.002px;color:#1c1c1c;">(no filter)</span>
<div class="a" style="left:410.500px;top:257.60px;width:9px;height:9px;background:#fff;border:1px solid #dadada;box-sizing:border-box"></div>
<svg viewBox="0 0 10 10" width="7" height="7" style="left:411.700px;top:258.50px"><path d="M1.300 4.800l2.700 3.400 4.700-7.400" fill="none" stroke="#000" stroke-width="1.800"/></svg>
<span class="t" style="left:435.60px;top:256.20px;letter-spacing:-0.276px;color:#1c1c1c;">Points</span>
<span class="t" style="left:477.20px;top:256.20px;letter-spacing:-0.215px;color:#1c1c1c;">(all layers)</span>
<span class="t" style="left:677.20px;top:256.20px;letter-spacing:-0.002px;color:#1c1c1c;">(no filter)</span>
<div class="a" style="left:423px;top:233px;width:9px;height:9px;background:#c6d8c6;border:1px solid #9dbf9f;box-sizing:border-box"></div>
<div class="a" style="left:423px;top:249.300px;width:9px;height:1px;background:#f2d68f"></div>
<div class="a" style="left:423.900px;top:258.800px;width:6.200px;height:6.200px;border-radius:50%;background:#d8c2b2;border:.8px solid #c4a48e;box-sizing:border-box"></div>
<div class="a" style="left:408.700px;top:502.600px;width:42.500px;height:16px;background:#d9dfe9;border:1px solid #9cc3ec;box-sizing:border-box;border-radius:2px"></div>
<span class="t" style="left:416.40px;top:504.80px;letter-spacing:-0.273px;color:#1c1c1c;">Style</span>
<svg viewBox="0 0 6 4" width="5" height="3" style="left:443.00px;top:509.30px"><path d="M0 0h6L3 4z" fill="#444"/></svg>
<div class="a" style="left:720.6px;top:502.600px;width:42.0px;height:15.600px;background:linear-gradient(#f7f7f7,#e9e9e9);border:1px solid #c2c2c2;box-sizing:border-box;border-radius:2px"></div>
<span class="t" style="left:735.60px;top:504.70px;letter-spacing:-0.359px;color:#1c1c1c;">OK</span>
<div class="a" style="left:767.5px;top:502.600px;width:42.0px;height:15.600px;background:linear-gradient(#f7f7f7,#e9e9e9);border:1px solid #c2c2c2;box-sizing:border-box;border-radius:2px"></div>
<span class="t" style="left:774.25px;top:504.70px;letter-spacing:-0.123px;color:#1c1c1c;">Annulla</span>
<div class="a" style="left:813.6px;top:502.600px;width:42.0px;height:15.600px;background:linear-gradient(#f7f7f7,#e9e9e9);border:1px solid #c2c2c2;box-sizing:border-box;border-radius:2px"></div>
<span class="t" style="left:820.90px;top:504.70px;letter-spacing:-0.208px;color:#1c1c1c;">Applica</span>
<div class="a" style="left:859.7px;top:502.600px;width:42.0px;height:15.600px;background:linear-gradient(#f7f7f7,#e9e9e9);border:1px solid #c2c2c2;box-sizing:border-box;border-radius:2px"></div>
<span class="t" style="left:870.40px;top:504.70px;letter-spacing:0.108px;color:#1c1c1c;">Aiuto</span><div class="a" style="left:91px;top:368px;width:199px;height:153px;background:#fff;border:1px solid #a8a8a8;box-sizing:border-box;box-shadow:1.500px 1.500px 2px rgba(0,0,0,.45)"></div>
<span class="t" style="left:108.60px;top:369.80px;letter-spacing:-0.438px;color:#1c1c1c;"><u>Z</u>oom sul Layer</span>
<svg viewBox="0 0 16 16" width="12" height="12" style="left:94.00px;top:369.80px"><path d="M1.800 14.600l4.200-4.600" stroke="#4a3a10" stroke-width="2.900" stroke-linecap="round" opacity=".55"/><path d="M1.800 14.600l4.200-4.600" stroke="#d9a520" stroke-width="1.900" stroke-linecap="round"/><circle cx="9.500" cy="6.200" r="5.100" fill="#f6f6f6" stroke="#777" stroke-width="1.100"/></svg>
<span class="t" style="left:108.60px;top:384.90px;letter-spacing:-0.453px;color:#1c1c1c;">Mo<u>s</u>tra nella Panoramica</span>
<svg viewBox="0 0 16 16" width="12" height="12" style="left:94.00px;top:384.90px"><path d="M1 3h6l-.5 4.500h-5zM9 3h6l-.5 4.500h-5zM7 4.200h2" fill="#fff" stroke="#222" stroke-width="1.300"/><circle cx="12" cy="12" r="3.200" fill="#4a9a4a"/><path d="M10.300 12h3.400M12 10.300v3.400" stroke="#fff" stroke-width="1"/></svg>
<span class="t" style="left:108.60px;top:399.80px;letter-spacing:-0.531px;color:#1c1c1c;">Copia Layer</span>
<span class="t" style="left:108.60px;top:414.70px;letter-spacing:-0.508px;color:#1c1c1c;">Ri<u>n</u>omina Layer</span>
<div class="a" style="left:95px;top:427.7px;width:191.300px;height:1px;background:#dcdcdc"></div>
<span class="t" style="left:108.60px;top:430.80px;letter-spacing:-0.431px;color:#1c1c1c;"><u>D</u>uplica Layer</span>
<svg viewBox="0 0 16 16" width="12" height="12" style="left:94.00px;top:430.80px"><rect x="1.500" y="1.500" width="10" height="11" fill="#e9e9e9" stroke="#6a6a6a" stroke-width=".9"/><rect x="4" y="4" width="10" height="10.500" fill="#fafafa" stroke="#6a6a6a" stroke-width=".9"/><rect x="10" y="10.500" width="5" height="5" fill="#e9c13a"/></svg>
<span class="t" style="left:108.60px;top:446.00px;letter-spacing:-0.408px;color:#1c1c1c;"><u>R</u>imuovi Layer..</span>
<svg viewBox="0 0 16 16" width="12" height="12" style="left:94.00px;top:446.00px"><rect x="1.500" y="2" width="10.500" height="10" fill="#f6f6f6" stroke="#8a8a8a" stroke-width=".9"/><rect x="9" y="9.500" width="5.800" height="5.800" rx="1.200" fill="#d9403a"/><path d="M10.300 12.400h3.200" stroke="#fff" stroke-width="1"/></svg>
<div class="a" style="left:95px;top:458.7px;width:191.300px;height:1px;background:#dcdcdc"></div>
<span class="t" style="left:108.60px;top:462.00px;letter-spacing:-0.337px;color:#1c1c1c;">Impo<u>s</u>ta visibilità layer in base a scala..</span>
<span class="t" style="left:108.60px;top:476.60px;letter-spacing:-0.577px;color:#1c1c1c;">Imposta SR</span>
<svg viewBox="0 0 4 6" width="3" height="5" style="left:283.200px;top:480.1px"><path d="M0 0l4 3-4 3z" fill="#333"/></svg>
<div class="a" style="left:95px;top:489.1px;width:191.300px;height:1px;background:#dcdcdc"></div>
<span class="t" style="left:108.60px;top:492.70px;letter-spacing:-0.198px;color:#1c1c1c;">Stili</span>
<svg viewBox="0 0 4 6" width="3" height="5" style="left:283.200px;top:496.2px"><path d="M0 0l4 3-4 3z" fill="#333"/></svg>
<div class="a" style="left:92px;top:505.500px;width:197px;height:14.500px;background:#3399ff"></div>
<span class="t" style="left:108.60px;top:506.50px;letter-spacing:-0.299px;color:#fff;"><u style="text-decoration-color:#fff">P</u>roprietà..</span>
<div class="a" style="left:162.50px;top:502.20px;width:20.8px;height:20.8px;border-radius:50%;background:#d86543;box-shadow:0 1px 2px rgba(0,0,0,.35)"></div><span class="t" style="left:169.24px;top:507.10px;letter-spacing:-0.477px;color:#fff;font-size:14px;font-weight:bold;line-height:12px;">1</span>
<div class="a" style="left:178px;top:347.800px;width:30.500px;height:37.500px;background:#fff"></div>
<svg viewBox="0 0 31 38" width="30.500" height="37.500" style="left:178px;top:347.800px"><path d="M15.200 8.700V5.300l4.300-1.800L14.600.700" fill="none" stroke="#000" stroke-width="1.600"/><path d="M2.400 18.500c0-7.600 4.600-11 12.700-11s12.700 3.400 12.700 11v4.600c0 6.600-5 9.900-12.700 9.900S2.400 29.700 2.400 23.100z" fill="#fff" stroke="#000" stroke-width="2"/><path d="M2.400 18.600c4 1.600 21.400 1.600 25.400 0M15.200 7.500v12.300" fill="none" stroke="#000" stroke-width="1.800"/><path d="M17.300 9.400c5.200.3 7.900 3 8 7.700-2.500.7-5.200.9-8 .9z" fill="#000"/></svg>
<div class="a" style="left:408px;top:390px;width:144px;height:112px;background:#fff;border:1px solid #a8a8a8;box-sizing:border-box;box-shadow:1.500px 1.500px 2px rgba(0,0,0,.45)"></div>
<div class="a" style="left:409px;top:391px;width:142px;height:15px;background:#3399ff"></div>
<span class="t" style="left:426.00px;top:392.60px;letter-spacing:-0.393px;color:#fff;">Load Style...</span>
<span class="t" style="left:426.00px;top:408.10px;letter-spacing:-0.469px;color:#1c1c1c;">Save Style...</span>
<div class="a" style="left:412px;top:421.7px;width:136px;height:1px;background:#dcdcdc"></div>
<span class="t" style="left:426.00px;top:424.50px;letter-spacing:-0.421px;color:#1c1c1c;">Save as Default</span>
<span class="t" style="left:426.00px;top:439.90px;letter-spacing:-0.282px;color:#1c1c1c;">Restore Default</span>
<div class="a" style="left:412px;top:453.7px;width:136px;height:1px;background:#dcdcdc"></div>
<span class="t" style="left:426.00px;top:456.80px;letter-spacing:-0.316px;color:#1c1c1c;">Aggiungi...</span>
<span class="t" style="left:426.00px;top:472.40px;letter-spacing:-0.204px;color:#1c1c1c;">Rinomina stile corrente...</span>
<div class="a" style="left:412px;top:485.7px;width:136px;height:1px;background:#dcdcdc"></div>
<div class="a" style="left:415.800px;top:493.200px;width:3.200px;height:3.200px;border-radius:50%;background:#5a5a5a"></div>
<span class="t" style="left:426.00px;top:488.70px;letter-spacing:-0.009px;color:#7a7a7a;">predefinito</span>
<div class="a" style="left:488.90px;top:389.80px;width:20.8px;height:20.8px;border-radius:50%;background:#d86543;box-shadow:0 1px 2px rgba(0,0,0,.35)"></div><span class="t" style="left:495.64px;top:394.70px;letter-spacing:-0.477px;color:#fff;font-size:14px;font-weight:bold;line-height:12px;">3</span>
<div class="a" style="left:448.20px;top:509.50px;width:20.8px;height:20.8px;border-radius:50%;background:#d86543;box-shadow:0 1px 2px rgba(0,0,0,.35)"></div><span class="t" style="left:454.94px;top:514.40px;letter-spacing:-0.477px;color:#fff;font-size:14px;font-weight:bold;line-height:12px;">2</span>
</body></html>
